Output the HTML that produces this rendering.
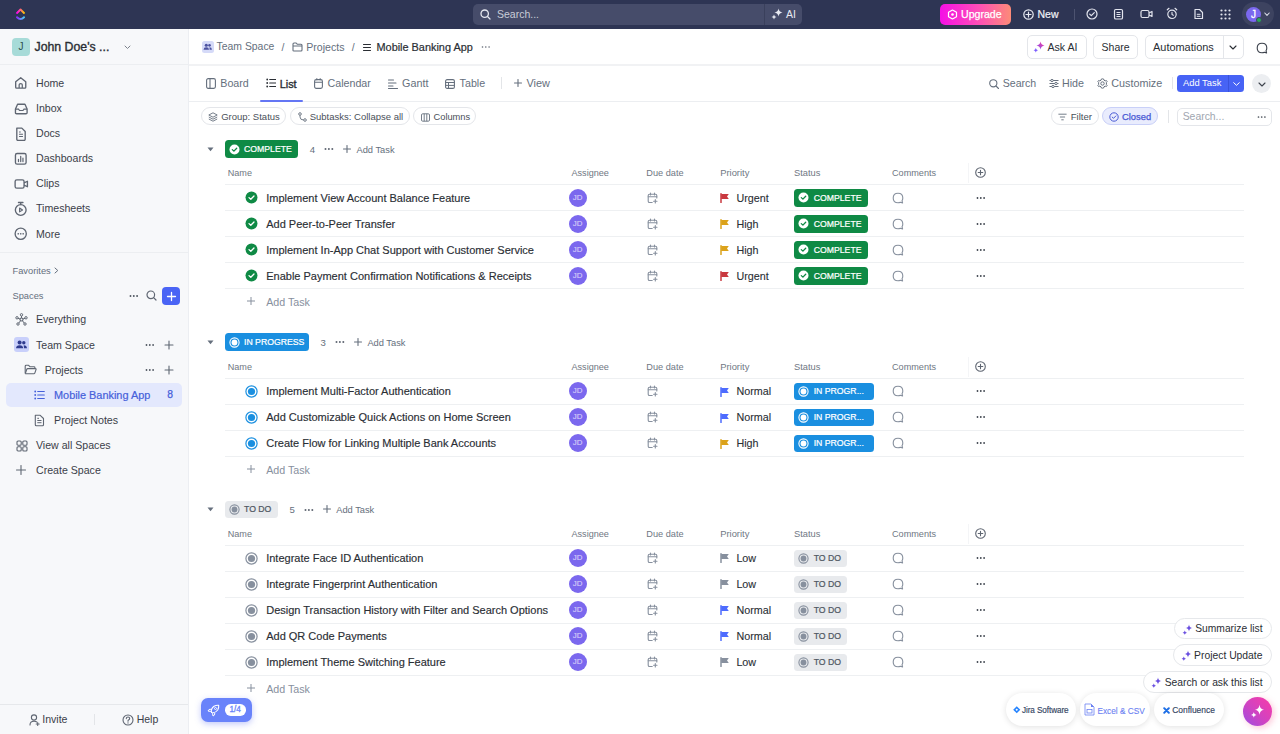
<!DOCTYPE html><html><head><meta charset="utf-8"><title>Mobile Banking App</title><style>
*{box-sizing:border-box;margin:0;padding:0}
html,body{width:1280px;height:734px;overflow:hidden;background:#fff;font-family:"Liberation Sans",sans-serif}
.t{position:absolute;white-space:nowrap}
</style></head><body>
<div style="position:absolute;left:0px;top:0px;width:1280px;height:29px;background:#2e3554"></div>
<svg style="position:absolute;left:15.00px;top:7.00px;" width="11.00" height="14.00" viewBox="0 0 11 14" fill="none"><defs><linearGradient id="lg1" x1="0" y1="0" x2="1" y2="0"><stop offset="0" stop-color="#ff02f0"/><stop offset="1" stop-color="#ffc800"/></linearGradient><linearGradient id="lg2" x1="0" y1="0" x2="1" y2="0"><stop offset="0" stop-color="#8930fd"/><stop offset="1" stop-color="#49ccf9"/></linearGradient></defs><path d="M2 5.9 L5.5 2.6 L9 5.9" stroke="url(#lg1)" stroke-width="2" stroke-linecap="round" stroke-linejoin="round"/><path d="M2 10.2 Q5.5 13.8 9 10.2" stroke="url(#lg2)" stroke-width="2" stroke-linecap="round"/></svg>
<div style="position:absolute;left:473px;top:4px;width:329px;height:21px;background:#464c6a;border-radius:5px"></div>
<div style="position:absolute;left:764px;top:4px;width:1px;height:21px;background:#3a405c"></div>
<svg style="position:absolute;left:480.00px;top:9.00px;" width="11.00" height="11.00" viewBox="0 0 11 11" fill="none"><circle cx="4.7" cy="4.7" r="3.7" stroke="#e6e8f0" stroke-width="1.3"/><path d="M7.5 7.5 L10 10" stroke="#e6e8f0" stroke-width="1.3" stroke-linecap="round"/></svg>
<div class="t" style="left:497px;top:4.0px;height:20px;line-height:20px;font-size:10.5px;color:#c9ccd8;font-weight:400;">Search...</div>
<svg style="position:absolute;left:771.00px;top:8.00px;" width="12.00" height="12.00" viewBox="0 0 12 12" fill="none"><path d="M7.5 0.5 Q8 4 11.5 4.5 Q8 5 7.5 8.5 Q7 5 3.5 4.5 Q7 4 7.5 0.5Z" fill="#e8eaf2"/><path d="M3 6.5 Q3.3 8.7 5.5 9 Q3.3 9.3 3 11.5 Q2.7 9.3 0.5 9 Q2.7 8.7 3 6.5Z" fill="#e8eaf2"/></svg>
<div class="t" style="left:786px;top:4.0px;height:20px;line-height:20px;font-size:10.5px;color:#e8eaf2;font-weight:400;">AI</div>
<div style="position:absolute;left:940px;top:4px;width:71px;height:21px;background:linear-gradient(90deg,#f50fe6 0%,#fd4fb6 55%,#fc8b78 100%);border-radius:5px"></div>
<svg style="position:absolute;left:947.00px;top:9.00px;" width="11.00" height="11.00" viewBox="0 0 11 11" fill="none"><path d="M5.5 1 L9.5 3.3 L9.5 7.7 L5.5 10 L1.5 7.7 L1.5 3.3Z" stroke="#fff" stroke-width="1.2" stroke-linejoin="round"/><circle cx="5.5" cy="5.5" r="1.3" fill="#fff"/></svg>
<div class="t" style="left:961px;top:3.9000000000000004px;height:20px;line-height:20px;font-size:10.6px;color:#fff;font-weight:400;-webkit-text-stroke:.25px #fff">Upgrade</div>
<svg style="position:absolute;left:1023.00px;top:9.00px;" width="11.00" height="11.00" viewBox="0 0 11 11" fill="none"><circle cx="5.5" cy="5.5" r="4.7" stroke="#e8eaf2" stroke-width="1.2"/><path d="M5.5 3 V8 M3 5.5 H8" stroke="#e8eaf2" stroke-width="1.2" stroke-linecap="round"/></svg>
<div class="t" style="left:1037.5px;top:3.9000000000000004px;height:20px;line-height:20px;font-size:10.5px;color:#f0f1f6;font-weight:400;-webkit-text-stroke:.2px #f0f1f6">New</div>
<div style="position:absolute;left:1074px;top:9px;width:1px;height:11px;background:#4d5370"></div>
<svg style="position:absolute;left:1086.00px;top:8.00px;" width="12.00" height="12.00" viewBox="0 0 12 12" fill="none"><circle cx="6" cy="6" r="5" stroke="#e3e5ee" stroke-width="1.2"/><path d="M3.7 6.1 L5.3 7.6 L8.3 4.6" stroke="#e3e5ee" stroke-width="1.2" stroke-linecap="round" stroke-linejoin="round"/></svg>
<svg style="position:absolute;left:1113.00px;top:8.00px;" width="11.00" height="12.00" viewBox="0 0 11 12" fill="none"><rect x="1.5" y="1.5" width="8" height="9.5" rx="1.3" stroke="#e3e5ee" stroke-width="1.2"/><path d="M3.5 4.5H7.5M3.5 6.5H7.5M3.5 8.5H7.5" stroke="#e3e5ee" stroke-width="1"/></svg>
<svg style="position:absolute;left:1140.00px;top:8.00px;" width="13.00" height="12.00" viewBox="0 0 13 12" fill="none"><rect x="1" y="2.5" width="8" height="7" rx="1.5" stroke="#e3e5ee" stroke-width="1.2"/><path d="M9 5 L12 3.5 V8.5 L9 7" stroke="#e3e5ee" stroke-width="1.2" stroke-linejoin="round"/></svg>
<svg style="position:absolute;left:1166.00px;top:7.00px;" width="12.00" height="13.00" viewBox="0 0 12 13" fill="none"><circle cx="6" cy="7.3" r="4.2" stroke="#e3e5ee" stroke-width="1.2"/><path d="M6 5.3 V7.5 L7.3 8.3" stroke="#e3e5ee" stroke-width="1.1" stroke-linecap="round"/><path d="M1.3 2.8 L3 1.3 M10.7 2.8 L9 1.3" stroke="#e3e5ee" stroke-width="1.2" stroke-linecap="round"/></svg>
<svg style="position:absolute;left:1193.00px;top:8.00px;" width="11.00" height="12.00" viewBox="0 0 11 12" fill="none"><path d="M2 1.5 H6.5 L9.5 4.5 V10.5 H2Z" stroke="#e3e5ee" stroke-width="1.2" stroke-linejoin="round"/><path d="M3.8 6.3H7.5M3.8 8.3H7.5" stroke="#e3e5ee" stroke-width="1"/></svg>
<svg style="position:absolute;left:1220.00px;top:9.00px;" width="11.00" height="11.00" viewBox="0 0 11 11" fill="none"><circle cx="1.5" cy="1.5" r="1.1" fill="#e3e5ee"/><circle cx="1.5" cy="5.5" r="1.1" fill="#e3e5ee"/><circle cx="1.5" cy="9.5" r="1.1" fill="#e3e5ee"/><circle cx="5.5" cy="1.5" r="1.1" fill="#e3e5ee"/><circle cx="5.5" cy="5.5" r="1.1" fill="#e3e5ee"/><circle cx="5.5" cy="9.5" r="1.1" fill="#e3e5ee"/><circle cx="9.5" cy="1.5" r="1.1" fill="#e3e5ee"/><circle cx="9.5" cy="5.5" r="1.1" fill="#e3e5ee"/><circle cx="9.5" cy="9.5" r="1.1" fill="#e3e5ee"/></svg>
<div style="position:absolute;left:1241.7px;top:2.3px;width:32px;height:23.5px;background:#3d4360;border-radius:12px"></div>
<div style="position:absolute;left:1246px;top:7px;width:15px;height:15px;background:#7b68ee;border-radius:50%"></div>
<div class="t" style="left:1246px;top:8.5px;height:12px;line-height:12px;font-size:10px;color:#fff;font-weight:400;width:15px;text-align:center;-webkit-text-stroke:.3px #fff">J</div>
<div style="position:absolute;left:1256px;top:17px;width:6px;height:6px;background:#2aa956;border-radius:50%;border:1px solid #3d4360"></div>
<svg style="position:absolute;left:1264.00px;top:12.00px;" width="6.00" height="5.00" viewBox="0 0 6 5" fill="none"><path d="M0.8 1 L3 3.4 L5.2 1" stroke="#d9dbe6" stroke-width="1.1" stroke-linecap="round" stroke-linejoin="round"/></svg>
<div style="position:absolute;left:0px;top:29px;width:189px;height:705px;background:#f7f8fa;border-right:1px solid #eceef2"></div>
<div style="position:absolute;left:0px;top:64px;width:188px;height:1px;background:#eceef1"></div>
<div style="position:absolute;left:12px;top:38px;width:18px;height:18px;background:#a7dbd8;border-radius:4px"></div>
<div class="t" style="left:12px;top:41.0px;height:12px;line-height:12px;font-size:10px;color:#2d4f4d;font-weight:400;width:18px;text-align:center">J</div>
<div class="t" style="left:34.5px;top:36.5px;height:20px;line-height:20px;font-size:12.3px;color:#2a2e34;font-weight:400;-webkit-text-stroke:.35px #2a2e34">John Doe's ...</div>
<svg style="position:absolute;left:124.00px;top:44.50px;" width="7.00" height="5.00" viewBox="0 0 7 5" fill="none"><path d="M1 1 L3.5 3.5 L6 1" stroke="#7c828c" stroke-width="1" stroke-linecap="round" stroke-linejoin="round"/></svg>
<svg style="position:absolute;left:14.48px;top:76.48px;" width="13.44" height="13.44" viewBox="0 0 12 12" fill="none"><path d="M1.5 5.2 L6 1.5 L10.5 5.2 V10 Q10.5 10.8 9.7 10.8 H2.3 Q1.5 10.8 1.5 10Z" stroke="#5f6672" stroke-width="1.2" stroke-linejoin="round"/><path d="M4.6 10.8 V7.8 Q4.6 6.8 6 6.8 Q7.4 6.8 7.4 7.8 V10.8" stroke="#5f6672" stroke-width="1.1"/></svg>
<div class="t" style="left:36px;top:73.2px;height:20px;line-height:20px;font-size:10.6px;color:#3b4049;font-weight:400;">Home</div>
<svg style="position:absolute;left:14.42px;top:101.53px;" width="14.56" height="13.44" viewBox="0 0 13 12" fill="none"><path d="M1.3 6.3 L3.2 2 H9.8 L11.7 6.3 V9.5 Q11.7 10.5 10.7 10.5 H2.3 Q1.3 10.5 1.3 9.5Z" stroke="#5f6672" stroke-width="1.2" stroke-linejoin="round"/><path d="M1.3 6.3 H4 L5 7.6 H8 L9 6.3 H11.7" stroke="#5f6672" stroke-width="1.1"/></svg>
<div class="t" style="left:36px;top:98.25px;height:20px;line-height:20px;font-size:10.6px;color:#3b4049;font-weight:400;">Inbox</div>
<svg style="position:absolute;left:14.48px;top:126.52px;" width="13.44" height="14.56" viewBox="0 0 12 13" fill="none"><path d="M2.5 1 H7 L10 4 V11 Q10 12 9 12 H3.5 Q2.5 12 2.5 11Z" stroke="#5f6672" stroke-width="1.2" stroke-linejoin="round"/><path d="M4.5 6.5H8M4.5 8.5H8M4.5 4.5H6" stroke="#5f6672" stroke-width="1"/></svg>
<div class="t" style="left:36px;top:123.30000000000001px;height:20px;line-height:20px;font-size:10.6px;color:#3b4049;font-weight:400;">Docs</div>
<svg style="position:absolute;left:14.48px;top:151.63px;" width="13.44" height="13.44" viewBox="0 0 12 12" fill="none"><rect x="1.3" y="1.3" width="9.5" height="9.5" rx="1.5" stroke="#5f6672" stroke-width="1.2"/><path d="M4 8.5V6.5M6 8.5V4M8 8.5V5.5" stroke="#5f6672" stroke-width="1.1" stroke-linecap="round"/></svg>
<div class="t" style="left:36px;top:148.35000000000002px;height:20px;line-height:20px;font-size:10.6px;color:#3b4049;font-weight:400;">Dashboards</div>
<svg style="position:absolute;left:14.42px;top:176.68px;" width="14.56" height="13.44" viewBox="0 0 13 12" fill="none"><rect x="1" y="2.5" width="8" height="7.5" rx="1.5" stroke="#5f6672" stroke-width="1.2"/><path d="M9 5.2 L12 3.8 V8.7 L9 7.3" stroke="#5f6672" stroke-width="1.2" stroke-linejoin="round"/></svg>
<div class="t" style="left:36px;top:173.4px;height:20px;line-height:20px;font-size:10.6px;color:#3b4049;font-weight:400;">Clips</div>
<svg style="position:absolute;left:14.48px;top:200.61px;" width="13.44" height="15.68" viewBox="0 0 12 14" fill="none"><circle cx="6" cy="8" r="4.8" stroke="#5f6672" stroke-width="1.2"/><path d="M4 1.3H8M6 1.3V3.2" stroke="#5f6672" stroke-width="1.2" stroke-linecap="round"/><path d="M5 6.3 L7.6 8 L5 9.7Z" stroke="#5f6672" stroke-width="1" stroke-linejoin="round"/></svg>
<div class="t" style="left:36px;top:198.45px;height:20px;line-height:20px;font-size:10.6px;color:#3b4049;font-weight:400;">Timesheets</div>
<svg style="position:absolute;left:14.48px;top:226.78px;" width="13.44" height="13.44" viewBox="0 0 12 12" fill="none"><circle cx="6" cy="6" r="5" stroke="#5f6672" stroke-width="1.2"/><circle cx="3.8" cy="6" r=".75" fill="#5f6672"/><circle cx="6" cy="6" r=".75" fill="#5f6672"/><circle cx="8.2" cy="6" r=".75" fill="#5f6672"/></svg>
<div class="t" style="left:36px;top:223.5px;height:20px;line-height:20px;font-size:10.6px;color:#3b4049;font-weight:400;">More</div>
<div style="position:absolute;left:0px;top:252px;width:188px;height:1px;background:#eceef1"></div>
<div class="t" style="left:12.5px;top:260.5px;height:20px;line-height:20px;font-size:9.3px;color:#656f7d;font-weight:400;">Favorites</div>
<svg style="position:absolute;left:54.00px;top:267.00px;" width="5.00" height="7.00" viewBox="0 0 5 7" fill="none"><path d="M1 1 L3.8 3.5 L1 6" stroke="#656f7d" stroke-width="1" stroke-linecap="round" stroke-linejoin="round"/></svg>
<div class="t" style="left:12.5px;top:285.5px;height:20px;line-height:20px;font-size:9.3px;color:#656f7d;font-weight:400;">Spaces</div>
<svg style="position:absolute;left:128.50px;top:293.50px;" width="10.00" height="4.00" viewBox="0 0 10 4" fill="none"><circle cx="1.5" cy="2" r="0.95" fill="#4f5660"/><circle cx="4.8" cy="2" r="0.95" fill="#4f5660"/><circle cx="8.1" cy="2" r="0.95" fill="#4f5660"/></svg>
<svg style="position:absolute;left:146.00px;top:290.00px;" width="11.00" height="11.00" viewBox="0 0 11 11" fill="none"><circle cx="4.8" cy="4.8" r="3.8" stroke="#5f6672" stroke-width="1.2"/><path d="M7.6 7.6 L10 10" stroke="#5f6672" stroke-width="1.2" stroke-linecap="round"/></svg>
<div style="position:absolute;left:162px;top:287px;width:17.5px;height:17.5px;background:#4a64f5;border-radius:4px"></div>
<svg style="position:absolute;left:165.50px;top:290.50px;" width="11.00" height="11.00" viewBox="0 0 11 11" fill="none"><path d="M5.5 1.5V9.5M1.5 5.5H9.5" stroke="#fff" stroke-width="1.3" stroke-linecap="round"/></svg>
<svg style="position:absolute;left:15.00px;top:312.80px;" width="13.00" height="13.00" viewBox="0 0 13 13" fill="none"><circle cx="6.5" cy="6.5" r="1.5" stroke="#5f6672" stroke-width="1.1"/><circle cx="6.5" cy="1.8" r="1.2" stroke="#5f6672" stroke-width="1"/><circle cx="2" cy="4.8" r="1.2" stroke="#5f6672" stroke-width="1"/><circle cx="11" cy="4.8" r="1.2" stroke="#5f6672" stroke-width="1"/><circle cx="3" cy="11" r="1.2" stroke="#5f6672" stroke-width="1"/><circle cx="10" cy="11" r="1.2" stroke="#5f6672" stroke-width="1"/><path d="M6.5 3V5M3 5.3L5 6M10 5.3L8 6M3.8 10L5.5 7.8M9.2 10L7.5 7.8" stroke="#5f6672" stroke-width="1"/></svg>
<div class="t" style="left:36px;top:309.0px;height:20px;line-height:20px;font-size:10.6px;color:#3b4049;font-weight:400;">Everything</div>
<div style="position:absolute;left:13.5px;top:337.3px;width:15px;height:15px;background:#c9d0fb;border-radius:3px"></div>
<svg style="position:absolute;left:13.50px;top:337.30px;" width="15.00" height="15.00" viewBox="0 0 15 15" fill="none"><circle cx="5.6" cy="5.5" r="2.0" fill="#2f3b8f"/><circle cx="9.8" cy="5.7" r="1.7" fill="#2f3b8f"/><path d="M2.0 11.3 Q2.2 8.3 5.6 8.3 Q9.0 8.3 9.2 11.3Z" fill="#2f3b8f"/><path d="M9.7 8.3 Q12.8 8.3 13.0 11.3 H10.0Z" fill="#2f3b8f"/></svg>
<div class="t" style="left:36px;top:334.5px;height:20px;line-height:20px;font-size:10.6px;color:#3b4049;font-weight:400;">Team Space</div>
<svg style="position:absolute;left:144.50px;top:342.50px;" width="10.00" height="4.00" viewBox="0 0 10 4" fill="none"><circle cx="1.5" cy="2" r="0.9" fill="#4f5660"/><circle cx="4.8" cy="2" r="0.9" fill="#4f5660"/><circle cx="8.1" cy="2" r="0.9" fill="#4f5660"/></svg>
<svg style="position:absolute;left:164.00px;top:339.50px;" width="10.00" height="10.00" viewBox="0 0 10 10" fill="none"><path d="M5 1V9M1 5H9" stroke="#5f6672" stroke-width="1.1" stroke-linecap="round"/></svg>
<svg style="position:absolute;left:24.00px;top:364.00px;" width="13.00" height="11.00" viewBox="0 0 13 11" fill="none"><path d="M1.2 9.3 V2.2 Q1.2 1.3 2.1 1.3 H4.6 L5.9 2.7 H10 Q10.9 2.7 10.9 3.6 V4.6" stroke="#5f6672" stroke-width="1.1" stroke-linejoin="round"/><path d="M1.2 9.7 L2.8 5.2 Q3 4.6 3.7 4.6 H11.5 Q12.3 4.6 12.1 5.3 L10.8 9.2 Q10.6 9.8 9.9 9.8 H1.2" stroke="#5f6672" stroke-width="1.1" stroke-linejoin="round"/></svg>
<div class="t" style="left:44.8px;top:359.8px;height:20px;line-height:20px;font-size:10.6px;color:#3b4049;font-weight:400;">Projects</div>
<svg style="position:absolute;left:144.50px;top:367.80px;" width="10.00" height="4.00" viewBox="0 0 10 4" fill="none"><circle cx="1.5" cy="2" r="0.9" fill="#4f5660"/><circle cx="4.8" cy="2" r="0.9" fill="#4f5660"/><circle cx="8.1" cy="2" r="0.9" fill="#4f5660"/></svg>
<svg style="position:absolute;left:164.00px;top:365.00px;" width="10.00" height="10.00" viewBox="0 0 10 10" fill="none"><path d="M5 1V9M1 5H9" stroke="#5f6672" stroke-width="1.1" stroke-linecap="round"/></svg>
<div style="position:absolute;left:6.3px;top:383px;width:176.2px;height:23.5px;background:#e3e8fd;border-radius:5px"></div>
<svg style="position:absolute;left:33.50px;top:389.70px;" width="11.00" height="10.00" viewBox="0 0 11 10" fill="none"><circle cx="1.2" cy="1.5" r=".9" fill="#4560da"/><circle cx="1.2" cy="5" r=".9" fill="#4560da"/><circle cx="1.2" cy="8.5" r=".9" fill="#4560da"/><path d="M3.7 1.5H10.3M3.7 5H10.3M3.7 8.5H10.3" stroke="#4560da" stroke-width="1.1" stroke-linecap="round"/></svg>
<div class="t" style="left:54px;top:384.7px;height:20px;line-height:20px;font-size:10.9px;color:#4560da;font-weight:400;-webkit-text-stroke:.2px #4560da">Mobile Banking App</div>
<div class="t" style="left:167.3px;top:384.9px;height:20px;line-height:20px;font-size:10.3px;color:#4560da;font-weight:400;-webkit-text-stroke:.25px #4560da">8</div>
<svg style="position:absolute;left:33.50px;top:414.00px;" width="11.00" height="13.00" viewBox="0 0 11 13" fill="none"><path d="M1.3 1.3 H6.2 L9.5 4.5 V10.8 Q9.5 11.8 8.5 11.8 H2.3 Q1.3 11.8 1.3 10.8Z" stroke="#5f6672" stroke-width="1.1" stroke-linejoin="round"/><path d="M3.3 6.5H7.5M3.3 8.7H7.5M3.3 4.3H5" stroke="#5f6672" stroke-width="1"/></svg>
<div class="t" style="left:54px;top:410.3px;height:20px;line-height:20px;font-size:10.7px;color:#3b4049;font-weight:400;">Project Notes</div>
<svg style="position:absolute;left:15.50px;top:439.50px;" width="12.00" height="12.00" viewBox="0 0 12 12" fill="none"><rect x="1" y="1" width="4.2" height="4.2" rx="1" stroke="#5f6672" stroke-width="1.1"/><rect x="6.8" y="1" width="4.2" height="4.2" rx="1" stroke="#5f6672" stroke-width="1.1"/><rect x="1" y="6.8" width="4.2" height="4.2" rx="1" stroke="#5f6672" stroke-width="1.1"/><rect x="6.8" y="6.8" width="4.2" height="4.2" rx="1" stroke="#5f6672" stroke-width="1.1"/></svg>
<div class="t" style="left:36px;top:435.3px;height:20px;line-height:20px;font-size:10.6px;color:#3b4049;font-weight:400;">View all Spaces</div>
<svg style="position:absolute;left:16.00px;top:465.30px;" width="10.00" height="10.00" viewBox="0 0 10 10" fill="none"><path d="M5 .5V9.5M.5 5H9.5" stroke="#5f6672" stroke-width="1.1" stroke-linecap="round"/></svg>
<div class="t" style="left:36px;top:460.4px;height:20px;line-height:20px;font-size:10.6px;color:#3b4049;font-weight:400;">Create Space</div>
<div style="position:absolute;left:0px;top:704px;width:188px;height:1px;background:#e6e8eb"></div>
<svg style="position:absolute;left:28.50px;top:713.50px;" width="11.00" height="12.00" viewBox="0 0 11 12" fill="none"><circle cx="5" cy="3.5" r="2.6" stroke="#5f6672" stroke-width="1.1"/><path d="M1 11 Q1 7.2 5 7.2 Q6.8 7.2 7.8 8" stroke="#5f6672" stroke-width="1.1" stroke-linecap="round"/><path d="M8.7 8.5V11.5M7.2 10H10.2" stroke="#5f6672" stroke-width="1.1" stroke-linecap="round"/></svg>
<div class="t" style="left:42.2px;top:709.0px;height:20px;line-height:20px;font-size:10.6px;color:#3b4049;font-weight:400;">Invite</div>
<div style="position:absolute;left:94px;top:713.5px;width:1px;height:11px;background:#e3e5e8"></div>
<svg style="position:absolute;left:122.00px;top:714.00px;" width="12.00" height="12.00" viewBox="0 0 12 12" fill="none"><circle cx="6" cy="6" r="5" stroke="#5f6672" stroke-width="1.1"/><path d="M4.3 4.6 Q4.3 3 6 3 Q7.7 3 7.7 4.5 Q7.7 5.5 6.5 6 Q6 6.2 6 7.2" stroke="#5f6672" stroke-width="1.1" stroke-linecap="round"/><circle cx="6" cy="8.9" r=".7" fill="#5f6672"/></svg>
<div class="t" style="left:136.7px;top:709.0px;height:20px;line-height:20px;font-size:10.5px;color:#3b4049;font-weight:400;">Help</div>
<div style="position:absolute;left:189px;top:64px;width:1091px;height:2px;background:#f1f2f4"></div>
<div style="position:absolute;left:202px;top:41.3px;width:11.5px;height:11.5px;background:#d5daf8;border-radius:2.5px"></div>
<svg style="position:absolute;left:202.00px;top:41.30px;" width="11.50" height="11.50" viewBox="0 0 11.5 11.5" fill="none"><circle cx="4.293333333333333" cy="4.216666666666667" r="1.5333333333333334" fill="#4b51a0"/><circle cx="7.5133333333333345" cy="4.37" r="1.3033333333333335" fill="#4b51a0"/><path d="M1.5333333333333334 8.663333333333334 Q1.686666666666667 6.363333333333334 4.293333333333333 6.363333333333334 Q6.9 6.363333333333334 7.053333333333334 8.663333333333334Z" fill="#4b51a0"/><path d="M7.4366666666666665 6.363333333333334 Q9.813333333333334 6.363333333333334 9.966666666666667 8.663333333333334 H7.666666666666667Z" fill="#4b51a0"/></svg>
<div class="t" style="left:216.6px;top:37.0px;height:20px;line-height:20px;font-size:10.4px;color:#656f7d;font-weight:400;">Team Space</div>
<div class="t" style="left:281.5px;top:37.0px;height:20px;line-height:20px;font-size:10.5px;color:#656f7d;font-weight:400;">/</div>
<svg style="position:absolute;left:291.50px;top:42.00px;" width="11.00" height="10.00" viewBox="0 0 11 10" fill="none"><path d="M1 8.5V2Q1 1 2 1H4.2L5.4 2.3H9Q10 2.3 10 3.3V8Q10 9 9 9H2Q1 9 1 8.5Z" stroke="#656f7d" stroke-width="1.1" stroke-linejoin="round"/><path d="M1 4H10" stroke="#656f7d" stroke-width="1"/></svg>
<div class="t" style="left:306.2px;top:37.0px;height:20px;line-height:20px;font-size:10.6px;color:#656f7d;font-weight:400;">Projects</div>
<div class="t" style="left:351.8px;top:37.0px;height:20px;line-height:20px;font-size:10.5px;color:#656f7d;font-weight:400;">/</div>
<svg style="position:absolute;left:363.00px;top:42.50px;" width="8.00" height="9.00" viewBox="0 0 8 9" fill="none"><path d="M.5 1.5H7.5M.5 4.5H7.5M.5 7.5H7.5" stroke="#2a2e34" stroke-width="1.1" stroke-linecap="round"/></svg>
<div class="t" style="left:376.5px;top:37.0px;height:20px;line-height:20px;font-size:10.9px;color:#2a2e34;font-weight:400;-webkit-text-stroke:.2px #2a2e34">Mobile Banking App</div>
<svg style="position:absolute;left:480.50px;top:45.00px;" width="10.00" height="4.00" viewBox="0 0 10 4" fill="none"><circle cx="1.5" cy="2" r="0.8" fill="#5f6672"/><circle cx="4.8" cy="2" r="0.8" fill="#5f6672"/><circle cx="8.1" cy="2" r="0.8" fill="#5f6672"/></svg>
<div style="position:absolute;left:1026.5px;top:35.2px;width:60px;height:23.4px;border:1px solid #e4e6ea;border-radius:5px;background:#fff"></div>
<svg style="position:absolute;left:1032.50px;top:41.00px;" width="12.00" height="12.00" viewBox="0 0 12 12" fill="none"><defs><linearGradient id="sp" x1="0" y1="1" x2="1" y2="0"><stop offset="0" stop-color="#7b4dff"/><stop offset="1" stop-color="#ff3d8f"/></linearGradient></defs><path d="M7.5 0.5 Q8 4 11.5 4.5 Q8 5 7.5 8.5 Q7 5 3.5 4.5 Q7 4 7.5 0.5Z" fill="url(#sp)"/><path d="M2.8 7 Q3.1 8.9 5 9.2 Q3.1 9.5 2.8 11.5 Q2.5 9.5 .6 9.2 Q2.5 8.9 2.8 7Z" fill="#7b5cff"/></svg>
<div class="t" style="left:1047.5px;top:37.0px;height:20px;line-height:20px;font-size:10.6px;color:#2a2e34;font-weight:400;">Ask AI</div>
<div style="position:absolute;left:1093.2px;top:35.2px;width:45.2px;height:23.4px;border:1px solid #e4e6ea;border-radius:5px;background:#fff"></div>
<div class="t" style="left:1101.6px;top:37.0px;height:20px;line-height:20px;font-size:10.5px;color:#2a2e34;font-weight:400;">Share</div>
<div style="position:absolute;left:1144.8px;top:35.2px;width:99px;height:23.4px;border:1px solid #e4e6ea;border-radius:5px;background:#fff"></div>
<div style="position:absolute;left:1222.5px;top:35.2px;width:1px;height:23.4px;background:#e4e6ea"></div>
<div class="t" style="left:1153px;top:37.0px;height:20px;line-height:20px;font-size:10.95px;color:#2a2e34;font-weight:400;">Automations</div>
<svg style="position:absolute;left:1229.00px;top:44.50px;" width="8.00" height="5.00" viewBox="0 0 8 5" fill="none"><path d="M1 1 L4 4 L7 1" stroke="#2a2e34" stroke-width="1.1" stroke-linecap="round" stroke-linejoin="round"/></svg>
<svg style="position:absolute;left:1256.00px;top:41.50px;" width="12.00" height="12.00" viewBox="0 0 12 12" fill="none"><path d="M6 1.2 Q10.8 1.2 10.8 6 Q10.8 7.6 10 8.7 L10.6 10.9 L8.4 10.3 Q7.3 10.8 6 10.8 Q1.2 10.8 1.2 6 Q1.2 1.2 6 1.2Z" stroke="#3d434d" stroke-width="1.1" stroke-linejoin="round"/></svg>
<div style="position:absolute;left:189px;top:101px;width:1091px;height:1px;background:#eceef1"></div>
<svg style="position:absolute;left:206.00px;top:78.00px;" width="10.00" height="11.00" viewBox="0 0 10 11" fill="none"><rect x=".6" y=".6" width="8.8" height="9.8" rx="1.6" stroke="#656f7d" stroke-width="1.1"/><path d="M4 .6V10.4" stroke="#656f7d" stroke-width="1.1"/></svg>
<div class="t" style="left:220.3px;top:73.3px;height:20px;line-height:20px;font-size:10.7px;color:#656f7d;font-weight:400;">Board</div>
<svg style="position:absolute;left:265.70px;top:78.30px;" width="10.00" height="10.00" viewBox="0 0 10 10" fill="none"><circle cx="1.2" cy="1.5" r=".9" fill="#2a2e34"/><circle cx="1.2" cy="5" r=".9" fill="#2a2e34"/><circle cx="1.2" cy="8.5" r=".9" fill="#2a2e34"/><path d="M3.7 1.5H10.3M3.7 5H10.3M3.7 8.5H10.3" stroke="#2a2e34" stroke-width="1.1" stroke-linecap="round"/></svg>
<div class="t" style="left:279.7px;top:73.5px;height:20px;line-height:20px;font-size:10.9px;color:#2a2e34;font-weight:400;-webkit-text-stroke:.35px #2a2e34">List</div>
<div style="position:absolute;left:260px;top:99.5px;width:42.5px;height:2px;background:#6476f4;border-radius:1px"></div>
<svg style="position:absolute;left:314.00px;top:78.00px;" width="9.00" height="11.00" viewBox="0 0 9 11" fill="none"><rect x=".6" y="1.6" width="7.8" height="8.8" rx="1.6" stroke="#656f7d" stroke-width="1.1"/><path d="M.6 4.3H8.4M2.8 .3V2.3M6.2 .3V2.3" stroke="#656f7d" stroke-width="1.1"/></svg>
<div class="t" style="left:327.5px;top:73.3px;height:20px;line-height:20px;font-size:10.7px;color:#656f7d;font-weight:400;">Calendar</div>
<svg style="position:absolute;left:388.00px;top:78.50px;" width="10.00" height="10.00" viewBox="0 0 10 10" fill="none"><path d="M.5 1H5.5M.5 4H8M.5 7H5M.5 9.5H9.5" stroke="#656f7d" stroke-width="1.1" stroke-linecap="round"/></svg>
<div class="t" style="left:402px;top:73.3px;height:20px;line-height:20px;font-size:10.8px;color:#656f7d;font-weight:400;">Gantt</div>
<svg style="position:absolute;left:445.00px;top:78.50px;" width="10.00" height="10.00" viewBox="0 0 10 10" fill="none"><rect x=".6" y=".6" width="8.8" height="8.8" rx="1.5" stroke="#656f7d" stroke-width="1.1"/><path d="M.6 3.5H9.4M.6 6.4H9.4M3.5 3.5V9.4" stroke="#656f7d" stroke-width="1"/></svg>
<div class="t" style="left:459.6px;top:73.3px;height:20px;line-height:20px;font-size:10.7px;color:#656f7d;font-weight:400;">Table</div>
<div style="position:absolute;left:500.5px;top:77px;width:1px;height:12px;background:#e3e5e8"></div>
<svg style="position:absolute;left:513.50px;top:79.00px;" width="8.00" height="8.00" viewBox="0 0 8 8" fill="none"><path d="M4 .5V7.5M.5 4H7.5" stroke="#656f7d" stroke-width="1.1" stroke-linecap="round"/></svg>
<div class="t" style="left:526.4px;top:73.3px;height:20px;line-height:20px;font-size:10.9px;color:#656f7d;font-weight:400;">View</div>
<svg style="position:absolute;left:988.50px;top:78.50px;" width="10.00" height="10.00" viewBox="0 0 10 10" fill="none"><circle cx="4.3" cy="4.3" r="3.6" stroke="#656f7d" stroke-width="1.1"/><path d="M7 7L9.5 9.5" stroke="#656f7d" stroke-width="1.1" stroke-linecap="round"/></svg>
<div class="t" style="left:1002.7px;top:73.3px;height:20px;line-height:20px;font-size:10.6px;color:#656f7d;font-weight:400;">Search</div>
<svg style="position:absolute;left:1048.50px;top:79.00px;" width="10.00" height="9.00" viewBox="0 0 10 9" fill="none"><path d="M.5 1.5H9.5M.5 4.5H9.5M.5 7.5H9.5" stroke="#656f7d" stroke-width="1"/><circle cx="3" cy="1.5" r="1.2" fill="#fff" stroke="#656f7d" stroke-width="1"/><circle cx="7" cy="4.5" r="1.2" fill="#fff" stroke="#656f7d" stroke-width="1"/><circle cx="4" cy="7.5" r="1.2" fill="#fff" stroke="#656f7d" stroke-width="1"/></svg>
<div class="t" style="left:1062px;top:73.3px;height:20px;line-height:20px;font-size:10.7px;color:#656f7d;font-weight:400;">Hide</div>
<svg style="position:absolute;left:1096.50px;top:78.00px;" width="11.00" height="11.00" viewBox="0 0 11 11" fill="none"><path d="M5.5 .8 L6.6 1 L7 2.2 L8.2 2.9 L9.4 2.5 L10.1 3.5 L9.4 4.5 V6.5 L10.1 7.5 L9.4 8.5 L8.2 8.1 L7 8.8 L6.6 10 L5.5 10.2 L4.4 10 L4 8.8 L2.8 8.1 L1.6 8.5 L.9 7.5 L1.6 6.5 V4.5 L.9 3.5 L1.6 2.5 L2.8 2.9 L4 2.2 L4.4 1Z" stroke="#656f7d" stroke-width="1" stroke-linejoin="round"/><circle cx="5.5" cy="5.5" r="1.7" stroke="#656f7d" stroke-width="1"/></svg>
<div class="t" style="left:1111.2px;top:73.3px;height:20px;line-height:20px;font-size:10.8px;color:#656f7d;font-weight:400;">Customize</div>
<div style="position:absolute;left:1171.5px;top:77px;width:1px;height:12px;background:#e3e5e8"></div>
<div style="position:absolute;left:1177px;top:74.5px;width:67px;height:17.6px;background:#4763f5;border-radius:3.5px"></div>
<div style="position:absolute;left:1228.3px;top:74.5px;width:1px;height:17.6px;background:#3a53dc"></div>
<div class="t" style="left:1183px;top:73.3px;height:20px;line-height:20px;font-size:9.4px;color:#fff;font-weight:400;">Add Task</div>
<svg style="position:absolute;left:1232.50px;top:81.50px;" width="7.00" height="4.00" viewBox="0 0 7 4" fill="none"><path d="M.7 .7 L3.5 3.3 L6.3 .7" stroke="#fff" stroke-width="1" stroke-linecap="round" stroke-linejoin="round"/></svg>
<div style="position:absolute;left:1252.3px;top:74px;width:19px;height:19px;background:#eceef1;border-radius:50%"></div>
<svg style="position:absolute;left:1258.00px;top:81.50px;" width="8.00" height="5.00" viewBox="0 0 8 5" fill="none"><path d="M1 1 L4 4 L7 1" stroke="#3d434d" stroke-width="1.1" stroke-linecap="round" stroke-linejoin="round"/></svg>
<div style="position:absolute;left:201.3px;top:107.2px;width:85.2px;height:18px;border:1px solid #e4e6ea;background:#fff;border-radius:9px"></div>
<svg style="position:absolute;left:208.00px;top:112.00px;" width="10.00" height="10.00" viewBox="0 0 10 10" fill="none"><path d="M5 .8 L9.2 3 L5 5.2 L.8 3Z" stroke="#656f7d" stroke-width=".9" stroke-linejoin="round"/><path d="M.8 5 L5 7.2 L9.2 5M.8 7 L5 9.2 L9.2 7" stroke="#656f7d" stroke-width=".9" stroke-linejoin="round"/></svg>
<div class="t" style="left:221.2px;top:106.7px;height:20px;line-height:20px;font-size:9.5px;color:#4a5059;font-weight:400;">Group: Status</div>
<div style="position:absolute;left:290px;top:107.2px;width:119.7px;height:18px;border:1px solid #e4e6ea;background:#fff;border-radius:9px"></div>
<svg style="position:absolute;left:297.50px;top:112.00px;" width="9.00" height="10.00" viewBox="0 0 9 10" fill="none"><circle cx="2" cy="2" r="1.3" stroke="#656f7d" stroke-width=".9"/><circle cx="7" cy="8" r="1.3" stroke="#656f7d" stroke-width=".9"/><path d="M2 3.3 V5 Q2 8 5.7 8" stroke="#656f7d" stroke-width=".9"/></svg>
<div class="t" style="left:309.7px;top:106.7px;height:20px;line-height:20px;font-size:9.5px;color:#4a5059;font-weight:400;">Subtasks: Collapse all</div>
<div style="position:absolute;left:413.3px;top:107.2px;width:63.2px;height:18px;border:1px solid #e4e6ea;background:#fff;border-radius:9px"></div>
<svg style="position:absolute;left:420.50px;top:112.50px;" width="9.00" height="9.00" viewBox="0 0 9 9" fill="none"><rect x=".5" y=".8" width="8" height="7.4" rx="1.2" stroke="#656f7d" stroke-width=".9"/><path d="M3.2 .8V8.2M5.8 .8V8.2" stroke="#656f7d" stroke-width=".9"/></svg>
<div class="t" style="left:433.5px;top:106.7px;height:20px;line-height:20px;font-size:9.3px;color:#4a5059;font-weight:400;">Columns</div>
<div style="position:absolute;left:1050.8px;top:107.2px;width:47.8px;height:18px;border:1px solid #e4e6ea;background:#fff;border-radius:9px"></div>
<svg style="position:absolute;left:1058.00px;top:113.00px;" width="9.00" height="8.00" viewBox="0 0 9 8" fill="none"><path d="M.8 1.2H8.2M2.3 4H6.7M3.7 6.8H5.3" stroke="#656f7d" stroke-width=".9" stroke-linecap="round"/></svg>
<div class="t" style="left:1070.7px;top:106.7px;height:20px;line-height:20px;font-size:9.6px;color:#4a5059;font-weight:400;">Filter</div>
<div style="position:absolute;left:1102px;top:107.2px;width:56px;height:18px;border:1px solid #c9d0f8;background:#e9ecfd;border-radius:9px"></div>
<svg style="position:absolute;left:1108.80px;top:112.30px;" width="10.00" height="10.00" viewBox="0 0 10 10" fill="none"><circle cx="5" cy="5" r="4.2" stroke="#4a5bd4" stroke-width="1"/><path d="M3.2 5.1 L4.5 6.3 L6.9 3.9" stroke="#4a5bd4" stroke-width="1" stroke-linecap="round" stroke-linejoin="round"/></svg>
<div class="t" style="left:1122px;top:106.7px;height:20px;line-height:20px;font-size:9.4px;color:#4858d4;font-weight:400;-webkit-text-stroke:.25px #4858d4">Closed</div>
<div style="position:absolute;left:1167.5px;top:110px;width:1px;height:13px;background:#e3e5e8"></div>
<div style="position:absolute;left:1177px;top:107.6px;width:95px;height:18px;border:1px solid #e4e6ea;border-radius:5px;background:#fff"></div>
<div class="t" style="left:1182.7px;top:107.3px;height:20px;line-height:20px;font-size:10.4px;color:#a0a6b0;font-weight:400;">Search...</div>
<svg style="position:absolute;left:1256.50px;top:114.70px;" width="10.00" height="4.00" viewBox="0 0 10 4" fill="none"><circle cx="1.5" cy="2" r="0.85" fill="#4a5059"/><circle cx="4.7" cy="2" r="0.85" fill="#4a5059"/><circle cx="7.9" cy="2" r="0.85" fill="#4a5059"/></svg>
<svg style="position:absolute;left:207.00px;top:147.00px;" width="7.00" height="5.00" viewBox="0 0 7 5" fill="none"><path d="M.5 .5 H6.5 L3.5 4.3Z" fill="#656f7d"/></svg>
<div style="position:absolute;left:224.7px;top:140.3px;width:73.4px;height:17.4px;background:#0f8a45;border-radius:3.5px"></div>
<svg style="position:absolute;left:228.70px;top:143.50px;" width="11.00" height="11.00" viewBox="0 0 11 11" fill="none"><circle cx="5.5" cy="5.5" r="5" fill="#fff"/><path d="M3.3 5.6 L4.9 7.1 L7.7 4.2" stroke="#0f8a45" stroke-width="1.3" stroke-linecap="round" stroke-linejoin="round"/></svg>
<div class="t" style="left:244px;top:143.0px;height:12px;line-height:12px;font-size:8.7px;color:#fff;font-weight:400;-webkit-text-stroke:.22px #fff">COMPLETE</div>
<div class="t" style="left:309.70000000000005px;top:139.6px;height:20px;line-height:20px;font-size:9.6px;color:#656f7d;font-weight:400;">4</div>
<svg style="position:absolute;left:324.20px;top:147.30px;" width="10.00" height="4.00" viewBox="0 0 10 4" fill="none"><circle cx="1.5" cy="2" r="1" fill="#5f6672"/><circle cx="4.9" cy="2" r="1" fill="#5f6672"/><circle cx="8.3" cy="2" r="1" fill="#5f6672"/></svg>
<svg style="position:absolute;left:343.20px;top:145.00px;" width="8.00" height="8.00" viewBox="0 0 8 8" fill="none"><path d="M4 .5V7.5M.5 4H7.5" stroke="#656f7d" stroke-width="1.1" stroke-linecap="round"/></svg>
<div class="t" style="left:356.50000000000006px;top:139.5px;height:20px;line-height:20px;font-size:9.3px;color:#656f7d;font-weight:400;">Add Task</div>
<div class="t" style="left:227.7px;top:162.6px;height:20px;line-height:20px;font-size:9.1px;color:#6f7783;font-weight:400;">Name</div>
<div class="t" style="left:571.5px;top:162.6px;height:20px;line-height:20px;font-size:9.1px;color:#6f7783;font-weight:400;">Assignee</div>
<div class="t" style="left:646.3px;top:162.6px;height:20px;line-height:20px;font-size:9.2px;color:#6f7783;font-weight:400;">Due date</div>
<div class="t" style="left:720.2px;top:162.6px;height:20px;line-height:20px;font-size:9.4px;color:#6f7783;font-weight:400;">Priority</div>
<div class="t" style="left:794px;top:162.6px;height:20px;line-height:20px;font-size:9.3px;color:#6f7783;font-weight:400;">Status</div>
<div class="t" style="left:892px;top:162.6px;height:20px;line-height:20px;font-size:9.15px;color:#6f7783;font-weight:400;">Comments</div>
<svg style="position:absolute;left:975.00px;top:167.10px;" width="11.00" height="11.00" viewBox="0 0 11 11" fill="none"><circle cx="5.5" cy="5.5" r="4.8" stroke="#5f6672" stroke-width="1.1"/><path d="M5.5 3.2V7.8M3.2 5.5H7.8" stroke="#5f6672" stroke-width="1.1" stroke-linecap="round"/></svg>
<div style="position:absolute;left:225px;top:184px;width:1019px;height:1px;background:#eef0f2"></div>
<div style="position:absolute;left:968px;top:162.6px;width:1px;height:20px;background:#f4f5f7"></div>
<svg style="position:absolute;left:244.70px;top:191.40px;" width="13.00" height="13.00" viewBox="0 0 13 13" fill="none"><circle cx="6.5" cy="6.5" r="6" fill="#0f8a45"/><path d="M4 6.6 L5.8 8.3 L9 5" stroke="#fff" stroke-width="1.3" stroke-linecap="round" stroke-linejoin="round"/></svg>
<div class="t" style="left:266.2px;top:187.9px;height:20px;line-height:20px;font-size:11px;color:#2a2e34;font-weight:400;-webkit-text-stroke:.15px #2a2e34">Implement View Account Balance Feature</div>
<div style="position:absolute;left:568.6px;top:188.9px;width:18px;height:18px;background:#7b68ee;border-radius:50%"></div>
<div class="t" style="left:568.6px;top:192.9px;height:10px;line-height:10px;font-size:7.9px;color:#d3cbf9;font-weight:400;width:18px;text-align:center;-webkit-text-stroke:.15px #d3cbf9">JD</div>
<svg style="position:absolute;left:646.50px;top:191.90px;" width="11.00" height="12.00" viewBox="0 0 11 12" fill="none"><path d="M5.2 10.5 H2.5 Q1.2 10.5 1.2 9.2 V3.5 Q1.2 2.2 2.5 2.2 H8.5 Q9.8 2.2 9.8 3.5 V6" stroke="#87909e" stroke-width="1.1" stroke-linecap="round"/><path d="M1.2 4.8H9.8M3.5 1V3M7.5 1V3" stroke="#87909e" stroke-width="1.1" stroke-linecap="round"/><path d="M8.3 7.5V11M6.6 9.3H10" stroke="#87909e" stroke-width="1.1" stroke-linecap="round"/></svg>
<svg style="position:absolute;left:719.70px;top:193.10px;" width="10.00" height="10.00" viewBox="0 0 10 10" fill="none"><path d="M1 .8 V9.5" stroke="#c9383f" stroke-width="1.5" stroke-linecap="round"/><path d="M1.2 1 H8.8 L7 3.5 L8.8 6 H1.2Z" fill="#c9383f"/></svg>
<div class="t" style="left:736.4px;top:187.9px;height:20px;line-height:20px;font-size:10.76px;color:#2a2e34;font-weight:400;-webkit-text-stroke:.1px #2a2e34">Urgent</div>
<div style="position:absolute;left:793.9px;top:189.20000000000002px;width:73.8px;height:17.4px;background:#0f8a45;border-radius:3.5px"></div>
<svg style="position:absolute;left:797.90px;top:192.40px;" width="11.00" height="11.00" viewBox="0 0 11 11" fill="none"><circle cx="5.5" cy="5.5" r="5" fill="#fff"/><path d="M3.3 5.6 L4.9 7.1 L7.7 4.2" stroke="#0f8a45" stroke-width="1.3" stroke-linecap="round" stroke-linejoin="round"/></svg>
<div class="t" style="left:813.7px;top:191.9px;height:12px;line-height:12px;font-size:8.7px;color:#fff;font-weight:400;-webkit-text-stroke:.22px #fff">COMPLETE</div>
<svg style="position:absolute;left:892.00px;top:191.60px;" width="12.00" height="12.00" viewBox="0 0 12 12" fill="none"><path d="M6 1.2 Q10.8 1.2 10.8 6 Q10.8 7.6 10 8.7 L10.6 10.9 L8.4 10.3 Q7.3 10.8 6 10.8 Q1.2 10.8 1.2 6 Q1.2 1.2 6 1.2Z" stroke="#87909e" stroke-width="1.1" stroke-linejoin="round"/></svg>
<svg style="position:absolute;left:975.50px;top:195.90px;" width="10.00" height="4.00" viewBox="0 0 10 4" fill="none"><circle cx="1.5" cy="2" r="0.9" fill="#3d434d"/><circle cx="4.8" cy="2" r="0.9" fill="#3d434d"/><circle cx="8.1" cy="2" r="0.9" fill="#3d434d"/></svg>
<div style="position:absolute;left:225px;top:210px;width:1019px;height:1px;background:#eef0f2"></div>
<svg style="position:absolute;left:244.70px;top:217.40px;" width="13.00" height="13.00" viewBox="0 0 13 13" fill="none"><circle cx="6.5" cy="6.5" r="6" fill="#0f8a45"/><path d="M4 6.6 L5.8 8.3 L9 5" stroke="#fff" stroke-width="1.3" stroke-linecap="round" stroke-linejoin="round"/></svg>
<div class="t" style="left:266.2px;top:213.9px;height:20px;line-height:20px;font-size:11px;color:#2a2e34;font-weight:400;-webkit-text-stroke:.15px #2a2e34">Add Peer-to-Peer Transfer</div>
<div style="position:absolute;left:568.6px;top:214.9px;width:18px;height:18px;background:#7b68ee;border-radius:50%"></div>
<div class="t" style="left:568.6px;top:218.9px;height:10px;line-height:10px;font-size:7.9px;color:#d3cbf9;font-weight:400;width:18px;text-align:center;-webkit-text-stroke:.15px #d3cbf9">JD</div>
<svg style="position:absolute;left:646.50px;top:217.90px;" width="11.00" height="12.00" viewBox="0 0 11 12" fill="none"><path d="M5.2 10.5 H2.5 Q1.2 10.5 1.2 9.2 V3.5 Q1.2 2.2 2.5 2.2 H8.5 Q9.8 2.2 9.8 3.5 V6" stroke="#87909e" stroke-width="1.1" stroke-linecap="round"/><path d="M1.2 4.8H9.8M3.5 1V3M7.5 1V3" stroke="#87909e" stroke-width="1.1" stroke-linecap="round"/><path d="M8.3 7.5V11M6.6 9.3H10" stroke="#87909e" stroke-width="1.1" stroke-linecap="round"/></svg>
<svg style="position:absolute;left:719.70px;top:219.10px;" width="10.00" height="10.00" viewBox="0 0 10 10" fill="none"><path d="M1 .8 V9.5" stroke="#dba21a" stroke-width="1.5" stroke-linecap="round"/><path d="M1.2 1 H8.8 L7 3.5 L8.8 6 H1.2Z" fill="#dba21a"/></svg>
<div class="t" style="left:736.4px;top:213.9px;height:20px;line-height:20px;font-size:10.76px;color:#2a2e34;font-weight:400;-webkit-text-stroke:.1px #2a2e34">High</div>
<div style="position:absolute;left:793.9px;top:215.20000000000002px;width:73.8px;height:17.4px;background:#0f8a45;border-radius:3.5px"></div>
<svg style="position:absolute;left:797.90px;top:218.40px;" width="11.00" height="11.00" viewBox="0 0 11 11" fill="none"><circle cx="5.5" cy="5.5" r="5" fill="#fff"/><path d="M3.3 5.6 L4.9 7.1 L7.7 4.2" stroke="#0f8a45" stroke-width="1.3" stroke-linecap="round" stroke-linejoin="round"/></svg>
<div class="t" style="left:813.7px;top:217.9px;height:12px;line-height:12px;font-size:8.7px;color:#fff;font-weight:400;-webkit-text-stroke:.22px #fff">COMPLETE</div>
<svg style="position:absolute;left:892.00px;top:217.60px;" width="12.00" height="12.00" viewBox="0 0 12 12" fill="none"><path d="M6 1.2 Q10.8 1.2 10.8 6 Q10.8 7.6 10 8.7 L10.6 10.9 L8.4 10.3 Q7.3 10.8 6 10.8 Q1.2 10.8 1.2 6 Q1.2 1.2 6 1.2Z" stroke="#87909e" stroke-width="1.1" stroke-linejoin="round"/></svg>
<svg style="position:absolute;left:975.50px;top:221.90px;" width="10.00" height="4.00" viewBox="0 0 10 4" fill="none"><circle cx="1.5" cy="2" r="0.9" fill="#3d434d"/><circle cx="4.8" cy="2" r="0.9" fill="#3d434d"/><circle cx="8.1" cy="2" r="0.9" fill="#3d434d"/></svg>
<div style="position:absolute;left:225px;top:236px;width:1019px;height:1px;background:#eef0f2"></div>
<svg style="position:absolute;left:244.70px;top:243.40px;" width="13.00" height="13.00" viewBox="0 0 13 13" fill="none"><circle cx="6.5" cy="6.5" r="6" fill="#0f8a45"/><path d="M4 6.6 L5.8 8.3 L9 5" stroke="#fff" stroke-width="1.3" stroke-linecap="round" stroke-linejoin="round"/></svg>
<div class="t" style="left:266.2px;top:239.9px;height:20px;line-height:20px;font-size:11px;color:#2a2e34;font-weight:400;-webkit-text-stroke:.15px #2a2e34">Implement In-App Chat Support with Customer Service</div>
<div style="position:absolute;left:568.6px;top:240.9px;width:18px;height:18px;background:#7b68ee;border-radius:50%"></div>
<div class="t" style="left:568.6px;top:244.9px;height:10px;line-height:10px;font-size:7.9px;color:#d3cbf9;font-weight:400;width:18px;text-align:center;-webkit-text-stroke:.15px #d3cbf9">JD</div>
<svg style="position:absolute;left:646.50px;top:243.90px;" width="11.00" height="12.00" viewBox="0 0 11 12" fill="none"><path d="M5.2 10.5 H2.5 Q1.2 10.5 1.2 9.2 V3.5 Q1.2 2.2 2.5 2.2 H8.5 Q9.8 2.2 9.8 3.5 V6" stroke="#87909e" stroke-width="1.1" stroke-linecap="round"/><path d="M1.2 4.8H9.8M3.5 1V3M7.5 1V3" stroke="#87909e" stroke-width="1.1" stroke-linecap="round"/><path d="M8.3 7.5V11M6.6 9.3H10" stroke="#87909e" stroke-width="1.1" stroke-linecap="round"/></svg>
<svg style="position:absolute;left:719.70px;top:245.10px;" width="10.00" height="10.00" viewBox="0 0 10 10" fill="none"><path d="M1 .8 V9.5" stroke="#dba21a" stroke-width="1.5" stroke-linecap="round"/><path d="M1.2 1 H8.8 L7 3.5 L8.8 6 H1.2Z" fill="#dba21a"/></svg>
<div class="t" style="left:736.4px;top:239.9px;height:20px;line-height:20px;font-size:10.76px;color:#2a2e34;font-weight:400;-webkit-text-stroke:.1px #2a2e34">High</div>
<div style="position:absolute;left:793.9px;top:241.20000000000002px;width:73.8px;height:17.4px;background:#0f8a45;border-radius:3.5px"></div>
<svg style="position:absolute;left:797.90px;top:244.40px;" width="11.00" height="11.00" viewBox="0 0 11 11" fill="none"><circle cx="5.5" cy="5.5" r="5" fill="#fff"/><path d="M3.3 5.6 L4.9 7.1 L7.7 4.2" stroke="#0f8a45" stroke-width="1.3" stroke-linecap="round" stroke-linejoin="round"/></svg>
<div class="t" style="left:813.7px;top:243.9px;height:12px;line-height:12px;font-size:8.7px;color:#fff;font-weight:400;-webkit-text-stroke:.22px #fff">COMPLETE</div>
<svg style="position:absolute;left:892.00px;top:243.60px;" width="12.00" height="12.00" viewBox="0 0 12 12" fill="none"><path d="M6 1.2 Q10.8 1.2 10.8 6 Q10.8 7.6 10 8.7 L10.6 10.9 L8.4 10.3 Q7.3 10.8 6 10.8 Q1.2 10.8 1.2 6 Q1.2 1.2 6 1.2Z" stroke="#87909e" stroke-width="1.1" stroke-linejoin="round"/></svg>
<svg style="position:absolute;left:975.50px;top:247.90px;" width="10.00" height="4.00" viewBox="0 0 10 4" fill="none"><circle cx="1.5" cy="2" r="0.9" fill="#3d434d"/><circle cx="4.8" cy="2" r="0.9" fill="#3d434d"/><circle cx="8.1" cy="2" r="0.9" fill="#3d434d"/></svg>
<div style="position:absolute;left:225px;top:262px;width:1019px;height:1px;background:#eef0f2"></div>
<svg style="position:absolute;left:244.70px;top:269.40px;" width="13.00" height="13.00" viewBox="0 0 13 13" fill="none"><circle cx="6.5" cy="6.5" r="6" fill="#0f8a45"/><path d="M4 6.6 L5.8 8.3 L9 5" stroke="#fff" stroke-width="1.3" stroke-linecap="round" stroke-linejoin="round"/></svg>
<div class="t" style="left:266.2px;top:265.9px;height:20px;line-height:20px;font-size:11px;color:#2a2e34;font-weight:400;-webkit-text-stroke:.15px #2a2e34">Enable Payment Confirmation Notifications &amp; Receipts</div>
<div style="position:absolute;left:568.6px;top:266.9px;width:18px;height:18px;background:#7b68ee;border-radius:50%"></div>
<div class="t" style="left:568.6px;top:270.9px;height:10px;line-height:10px;font-size:7.9px;color:#d3cbf9;font-weight:400;width:18px;text-align:center;-webkit-text-stroke:.15px #d3cbf9">JD</div>
<svg style="position:absolute;left:646.50px;top:269.90px;" width="11.00" height="12.00" viewBox="0 0 11 12" fill="none"><path d="M5.2 10.5 H2.5 Q1.2 10.5 1.2 9.2 V3.5 Q1.2 2.2 2.5 2.2 H8.5 Q9.8 2.2 9.8 3.5 V6" stroke="#87909e" stroke-width="1.1" stroke-linecap="round"/><path d="M1.2 4.8H9.8M3.5 1V3M7.5 1V3" stroke="#87909e" stroke-width="1.1" stroke-linecap="round"/><path d="M8.3 7.5V11M6.6 9.3H10" stroke="#87909e" stroke-width="1.1" stroke-linecap="round"/></svg>
<svg style="position:absolute;left:719.70px;top:271.10px;" width="10.00" height="10.00" viewBox="0 0 10 10" fill="none"><path d="M1 .8 V9.5" stroke="#c9383f" stroke-width="1.5" stroke-linecap="round"/><path d="M1.2 1 H8.8 L7 3.5 L8.8 6 H1.2Z" fill="#c9383f"/></svg>
<div class="t" style="left:736.4px;top:265.9px;height:20px;line-height:20px;font-size:10.76px;color:#2a2e34;font-weight:400;-webkit-text-stroke:.1px #2a2e34">Urgent</div>
<div style="position:absolute;left:793.9px;top:267.2px;width:73.8px;height:17.4px;background:#0f8a45;border-radius:3.5px"></div>
<svg style="position:absolute;left:797.90px;top:270.40px;" width="11.00" height="11.00" viewBox="0 0 11 11" fill="none"><circle cx="5.5" cy="5.5" r="5" fill="#fff"/><path d="M3.3 5.6 L4.9 7.1 L7.7 4.2" stroke="#0f8a45" stroke-width="1.3" stroke-linecap="round" stroke-linejoin="round"/></svg>
<div class="t" style="left:813.7px;top:269.9px;height:12px;line-height:12px;font-size:8.7px;color:#fff;font-weight:400;-webkit-text-stroke:.22px #fff">COMPLETE</div>
<svg style="position:absolute;left:892.00px;top:269.60px;" width="12.00" height="12.00" viewBox="0 0 12 12" fill="none"><path d="M6 1.2 Q10.8 1.2 10.8 6 Q10.8 7.6 10 8.7 L10.6 10.9 L8.4 10.3 Q7.3 10.8 6 10.8 Q1.2 10.8 1.2 6 Q1.2 1.2 6 1.2Z" stroke="#87909e" stroke-width="1.1" stroke-linejoin="round"/></svg>
<svg style="position:absolute;left:975.50px;top:273.90px;" width="10.00" height="4.00" viewBox="0 0 10 4" fill="none"><circle cx="1.5" cy="2" r="0.9" fill="#3d434d"/><circle cx="4.8" cy="2" r="0.9" fill="#3d434d"/><circle cx="8.1" cy="2" r="0.9" fill="#3d434d"/></svg>
<div style="position:absolute;left:225px;top:288px;width:1019px;height:1px;background:#eef0f2"></div>
<svg style="position:absolute;left:247.30px;top:297.20px;" width="8.00" height="8.00" viewBox="0 0 8 8" fill="none"><path d="M4 .4V7.6M.4 4H7.6" stroke="#87909e" stroke-width="1" stroke-linecap="round"/></svg>
<div class="t" style="left:266.2px;top:291.5px;height:20px;line-height:20px;font-size:10.7px;color:#87909e;font-weight:400;">Add Task</div>
<svg style="position:absolute;left:207.00px;top:340.00px;" width="7.00" height="5.00" viewBox="0 0 7 5" fill="none"><path d="M.5 .5 H6.5 L3.5 4.3Z" fill="#656f7d"/></svg>
<div style="position:absolute;left:224.7px;top:333.3px;width:84.3px;height:17.4px;background:#1a8fe0;border-radius:3.5px"></div>
<svg style="position:absolute;left:228.70px;top:336.50px;" width="11.00" height="11.00" viewBox="0 0 11 11" fill="none"><circle cx="5.5" cy="5.5" r="4.6" stroke="#fff" stroke-width="1.1"/><circle cx="5.5" cy="5.5" r="2.9" fill="#fff"/></svg>
<div class="t" style="left:244px;top:336.0px;height:12px;line-height:12px;font-size:8.7px;color:#fff;font-weight:400;-webkit-text-stroke:.22px #fff">IN PROGRESS</div>
<div class="t" style="left:320.6px;top:332.6px;height:20px;line-height:20px;font-size:9.6px;color:#656f7d;font-weight:400;">3</div>
<svg style="position:absolute;left:335.10px;top:340.30px;" width="10.00" height="4.00" viewBox="0 0 10 4" fill="none"><circle cx="1.5" cy="2" r="1" fill="#5f6672"/><circle cx="4.9" cy="2" r="1" fill="#5f6672"/><circle cx="8.3" cy="2" r="1" fill="#5f6672"/></svg>
<svg style="position:absolute;left:354.10px;top:338.00px;" width="8.00" height="8.00" viewBox="0 0 8 8" fill="none"><path d="M4 .5V7.5M.5 4H7.5" stroke="#656f7d" stroke-width="1.1" stroke-linecap="round"/></svg>
<div class="t" style="left:367.40000000000003px;top:332.5px;height:20px;line-height:20px;font-size:9.3px;color:#656f7d;font-weight:400;">Add Task</div>
<div class="t" style="left:227.7px;top:356.6px;height:20px;line-height:20px;font-size:9.1px;color:#6f7783;font-weight:400;">Name</div>
<div class="t" style="left:571.5px;top:356.6px;height:20px;line-height:20px;font-size:9.1px;color:#6f7783;font-weight:400;">Assignee</div>
<div class="t" style="left:646.3px;top:356.6px;height:20px;line-height:20px;font-size:9.2px;color:#6f7783;font-weight:400;">Due date</div>
<div class="t" style="left:720.2px;top:356.6px;height:20px;line-height:20px;font-size:9.4px;color:#6f7783;font-weight:400;">Priority</div>
<div class="t" style="left:794px;top:356.6px;height:20px;line-height:20px;font-size:9.3px;color:#6f7783;font-weight:400;">Status</div>
<div class="t" style="left:892px;top:356.6px;height:20px;line-height:20px;font-size:9.15px;color:#6f7783;font-weight:400;">Comments</div>
<svg style="position:absolute;left:975.00px;top:361.10px;" width="11.00" height="11.00" viewBox="0 0 11 11" fill="none"><circle cx="5.5" cy="5.5" r="4.8" stroke="#5f6672" stroke-width="1.1"/><path d="M5.5 3.2V7.8M3.2 5.5H7.8" stroke="#5f6672" stroke-width="1.1" stroke-linecap="round"/></svg>
<div style="position:absolute;left:225px;top:378px;width:1019px;height:1px;background:#eef0f2"></div>
<div style="position:absolute;left:968px;top:356.6px;width:1px;height:20px;background:#f4f5f7"></div>
<svg style="position:absolute;left:244.70px;top:384.80px;" width="13.00" height="13.00" viewBox="0 0 13 13" fill="none"><circle cx="6.5" cy="6.5" r="5.6" stroke="#1a8fe0" stroke-width="1.2"/><circle cx="6.5" cy="6.5" r="3.6" fill="#1a8fe0"/></svg>
<div class="t" style="left:266.2px;top:381.3px;height:20px;line-height:20px;font-size:11px;color:#2a2e34;font-weight:400;-webkit-text-stroke:.15px #2a2e34">Implement Multi-Factor Authentication</div>
<div style="position:absolute;left:568.6px;top:382.3px;width:18px;height:18px;background:#7b68ee;border-radius:50%"></div>
<div class="t" style="left:568.6px;top:386.3px;height:10px;line-height:10px;font-size:7.9px;color:#d3cbf9;font-weight:400;width:18px;text-align:center;-webkit-text-stroke:.15px #d3cbf9">JD</div>
<svg style="position:absolute;left:646.50px;top:385.30px;" width="11.00" height="12.00" viewBox="0 0 11 12" fill="none"><path d="M5.2 10.5 H2.5 Q1.2 10.5 1.2 9.2 V3.5 Q1.2 2.2 2.5 2.2 H8.5 Q9.8 2.2 9.8 3.5 V6" stroke="#87909e" stroke-width="1.1" stroke-linecap="round"/><path d="M1.2 4.8H9.8M3.5 1V3M7.5 1V3" stroke="#87909e" stroke-width="1.1" stroke-linecap="round"/><path d="M8.3 7.5V11M6.6 9.3H10" stroke="#87909e" stroke-width="1.1" stroke-linecap="round"/></svg>
<svg style="position:absolute;left:719.70px;top:386.50px;" width="10.00" height="10.00" viewBox="0 0 10 10" fill="none"><path d="M1 .8 V9.5" stroke="#4d6bfe" stroke-width="1.5" stroke-linecap="round"/><path d="M1.2 1 H8.8 L7 3.5 L8.8 6 H1.2Z" fill="#4d6bfe"/></svg>
<div class="t" style="left:736.4px;top:381.3px;height:20px;line-height:20px;font-size:10.76px;color:#2a2e34;font-weight:400;-webkit-text-stroke:.1px #2a2e34">Normal</div>
<div style="position:absolute;left:793.9px;top:382.6px;width:80px;height:17.4px;background:#1a8fe0;border-radius:3.5px"></div>
<svg style="position:absolute;left:797.90px;top:385.80px;" width="11.00" height="11.00" viewBox="0 0 11 11" fill="none"><circle cx="5.5" cy="5.5" r="4.6" stroke="#fff" stroke-width="1.1"/><circle cx="5.5" cy="5.5" r="2.9" fill="#fff"/></svg>
<div class="t" style="left:813.7px;top:385.3px;height:12px;line-height:12px;font-size:8.7px;color:#fff;font-weight:400;-webkit-text-stroke:.22px #fff">IN PROGR...</div>
<svg style="position:absolute;left:892.00px;top:385.00px;" width="12.00" height="12.00" viewBox="0 0 12 12" fill="none"><path d="M6 1.2 Q10.8 1.2 10.8 6 Q10.8 7.6 10 8.7 L10.6 10.9 L8.4 10.3 Q7.3 10.8 6 10.8 Q1.2 10.8 1.2 6 Q1.2 1.2 6 1.2Z" stroke="#87909e" stroke-width="1.1" stroke-linejoin="round"/></svg>
<svg style="position:absolute;left:975.50px;top:389.30px;" width="10.00" height="4.00" viewBox="0 0 10 4" fill="none"><circle cx="1.5" cy="2" r="0.9" fill="#3d434d"/><circle cx="4.8" cy="2" r="0.9" fill="#3d434d"/><circle cx="8.1" cy="2" r="0.9" fill="#3d434d"/></svg>
<div style="position:absolute;left:225px;top:404px;width:1019px;height:1px;background:#eef0f2"></div>
<svg style="position:absolute;left:244.70px;top:410.80px;" width="13.00" height="13.00" viewBox="0 0 13 13" fill="none"><circle cx="6.5" cy="6.5" r="5.6" stroke="#1a8fe0" stroke-width="1.2"/><circle cx="6.5" cy="6.5" r="3.6" fill="#1a8fe0"/></svg>
<div class="t" style="left:266.2px;top:407.3px;height:20px;line-height:20px;font-size:11px;color:#2a2e34;font-weight:400;-webkit-text-stroke:.15px #2a2e34">Add Customizable Quick Actions on Home Screen</div>
<div style="position:absolute;left:568.6px;top:408.3px;width:18px;height:18px;background:#7b68ee;border-radius:50%"></div>
<div class="t" style="left:568.6px;top:412.3px;height:10px;line-height:10px;font-size:7.9px;color:#d3cbf9;font-weight:400;width:18px;text-align:center;-webkit-text-stroke:.15px #d3cbf9">JD</div>
<svg style="position:absolute;left:646.50px;top:411.30px;" width="11.00" height="12.00" viewBox="0 0 11 12" fill="none"><path d="M5.2 10.5 H2.5 Q1.2 10.5 1.2 9.2 V3.5 Q1.2 2.2 2.5 2.2 H8.5 Q9.8 2.2 9.8 3.5 V6" stroke="#87909e" stroke-width="1.1" stroke-linecap="round"/><path d="M1.2 4.8H9.8M3.5 1V3M7.5 1V3" stroke="#87909e" stroke-width="1.1" stroke-linecap="round"/><path d="M8.3 7.5V11M6.6 9.3H10" stroke="#87909e" stroke-width="1.1" stroke-linecap="round"/></svg>
<svg style="position:absolute;left:719.70px;top:412.50px;" width="10.00" height="10.00" viewBox="0 0 10 10" fill="none"><path d="M1 .8 V9.5" stroke="#4d6bfe" stroke-width="1.5" stroke-linecap="round"/><path d="M1.2 1 H8.8 L7 3.5 L8.8 6 H1.2Z" fill="#4d6bfe"/></svg>
<div class="t" style="left:736.4px;top:407.3px;height:20px;line-height:20px;font-size:10.76px;color:#2a2e34;font-weight:400;-webkit-text-stroke:.1px #2a2e34">Normal</div>
<div style="position:absolute;left:793.9px;top:408.6px;width:80px;height:17.4px;background:#1a8fe0;border-radius:3.5px"></div>
<svg style="position:absolute;left:797.90px;top:411.80px;" width="11.00" height="11.00" viewBox="0 0 11 11" fill="none"><circle cx="5.5" cy="5.5" r="4.6" stroke="#fff" stroke-width="1.1"/><circle cx="5.5" cy="5.5" r="2.9" fill="#fff"/></svg>
<div class="t" style="left:813.7px;top:411.3px;height:12px;line-height:12px;font-size:8.7px;color:#fff;font-weight:400;-webkit-text-stroke:.22px #fff">IN PROGR...</div>
<svg style="position:absolute;left:892.00px;top:411.00px;" width="12.00" height="12.00" viewBox="0 0 12 12" fill="none"><path d="M6 1.2 Q10.8 1.2 10.8 6 Q10.8 7.6 10 8.7 L10.6 10.9 L8.4 10.3 Q7.3 10.8 6 10.8 Q1.2 10.8 1.2 6 Q1.2 1.2 6 1.2Z" stroke="#87909e" stroke-width="1.1" stroke-linejoin="round"/></svg>
<svg style="position:absolute;left:975.50px;top:415.30px;" width="10.00" height="4.00" viewBox="0 0 10 4" fill="none"><circle cx="1.5" cy="2" r="0.9" fill="#3d434d"/><circle cx="4.8" cy="2" r="0.9" fill="#3d434d"/><circle cx="8.1" cy="2" r="0.9" fill="#3d434d"/></svg>
<div style="position:absolute;left:225px;top:430px;width:1019px;height:1px;background:#eef0f2"></div>
<svg style="position:absolute;left:244.70px;top:436.80px;" width="13.00" height="13.00" viewBox="0 0 13 13" fill="none"><circle cx="6.5" cy="6.5" r="5.6" stroke="#1a8fe0" stroke-width="1.2"/><circle cx="6.5" cy="6.5" r="3.6" fill="#1a8fe0"/></svg>
<div class="t" style="left:266.2px;top:433.3px;height:20px;line-height:20px;font-size:11px;color:#2a2e34;font-weight:400;-webkit-text-stroke:.15px #2a2e34">Create Flow for Linking Multiple Bank Accounts</div>
<div style="position:absolute;left:568.6px;top:434.3px;width:18px;height:18px;background:#7b68ee;border-radius:50%"></div>
<div class="t" style="left:568.6px;top:438.3px;height:10px;line-height:10px;font-size:7.9px;color:#d3cbf9;font-weight:400;width:18px;text-align:center;-webkit-text-stroke:.15px #d3cbf9">JD</div>
<svg style="position:absolute;left:646.50px;top:437.30px;" width="11.00" height="12.00" viewBox="0 0 11 12" fill="none"><path d="M5.2 10.5 H2.5 Q1.2 10.5 1.2 9.2 V3.5 Q1.2 2.2 2.5 2.2 H8.5 Q9.8 2.2 9.8 3.5 V6" stroke="#87909e" stroke-width="1.1" stroke-linecap="round"/><path d="M1.2 4.8H9.8M3.5 1V3M7.5 1V3" stroke="#87909e" stroke-width="1.1" stroke-linecap="round"/><path d="M8.3 7.5V11M6.6 9.3H10" stroke="#87909e" stroke-width="1.1" stroke-linecap="round"/></svg>
<svg style="position:absolute;left:719.70px;top:438.50px;" width="10.00" height="10.00" viewBox="0 0 10 10" fill="none"><path d="M1 .8 V9.5" stroke="#dba21a" stroke-width="1.5" stroke-linecap="round"/><path d="M1.2 1 H8.8 L7 3.5 L8.8 6 H1.2Z" fill="#dba21a"/></svg>
<div class="t" style="left:736.4px;top:433.3px;height:20px;line-height:20px;font-size:10.76px;color:#2a2e34;font-weight:400;-webkit-text-stroke:.1px #2a2e34">High</div>
<div style="position:absolute;left:793.9px;top:434.6px;width:80px;height:17.4px;background:#1a8fe0;border-radius:3.5px"></div>
<svg style="position:absolute;left:797.90px;top:437.80px;" width="11.00" height="11.00" viewBox="0 0 11 11" fill="none"><circle cx="5.5" cy="5.5" r="4.6" stroke="#fff" stroke-width="1.1"/><circle cx="5.5" cy="5.5" r="2.9" fill="#fff"/></svg>
<div class="t" style="left:813.7px;top:437.3px;height:12px;line-height:12px;font-size:8.7px;color:#fff;font-weight:400;-webkit-text-stroke:.22px #fff">IN PROGR...</div>
<svg style="position:absolute;left:892.00px;top:437.00px;" width="12.00" height="12.00" viewBox="0 0 12 12" fill="none"><path d="M6 1.2 Q10.8 1.2 10.8 6 Q10.8 7.6 10 8.7 L10.6 10.9 L8.4 10.3 Q7.3 10.8 6 10.8 Q1.2 10.8 1.2 6 Q1.2 1.2 6 1.2Z" stroke="#87909e" stroke-width="1.1" stroke-linejoin="round"/></svg>
<svg style="position:absolute;left:975.50px;top:441.30px;" width="10.00" height="4.00" viewBox="0 0 10 4" fill="none"><circle cx="1.5" cy="2" r="0.9" fill="#3d434d"/><circle cx="4.8" cy="2" r="0.9" fill="#3d434d"/><circle cx="8.1" cy="2" r="0.9" fill="#3d434d"/></svg>
<div style="position:absolute;left:225px;top:456px;width:1019px;height:1px;background:#eef0f2"></div>
<svg style="position:absolute;left:247.30px;top:465.20px;" width="8.00" height="8.00" viewBox="0 0 8 8" fill="none"><path d="M4 .4V7.6M.4 4H7.6" stroke="#87909e" stroke-width="1" stroke-linecap="round"/></svg>
<div class="t" style="left:266.2px;top:459.5px;height:20px;line-height:20px;font-size:10.7px;color:#87909e;font-weight:400;">Add Task</div>
<svg style="position:absolute;left:207.00px;top:507.40px;" width="7.00" height="5.00" viewBox="0 0 7 5" fill="none"><path d="M.5 .5 H6.5 L3.5 4.3Z" fill="#656f7d"/></svg>
<div style="position:absolute;left:224.7px;top:500.7px;width:53.1px;height:17.4px;background:#e8eaed;border-radius:3.5px"></div>
<svg style="position:absolute;left:228.70px;top:503.90px;" width="11.00" height="11.00" viewBox="0 0 11 11" fill="none"><circle cx="5.5" cy="5.5" r="4.6" stroke="#87909e" stroke-width="1.1"/><circle cx="5.5" cy="5.5" r="2.9" fill="#87909e"/></svg>
<div class="t" style="left:244px;top:503.4px;height:12px;line-height:12px;font-size:8.7px;color:#4f5762;font-weight:400;-webkit-text-stroke:.22px #4f5762">TO DO</div>
<div class="t" style="left:289.40000000000003px;top:500.0px;height:20px;line-height:20px;font-size:9.6px;color:#656f7d;font-weight:400;">5</div>
<svg style="position:absolute;left:303.90px;top:507.70px;" width="10.00" height="4.00" viewBox="0 0 10 4" fill="none"><circle cx="1.5" cy="2" r="1" fill="#5f6672"/><circle cx="4.9" cy="2" r="1" fill="#5f6672"/><circle cx="8.3" cy="2" r="1" fill="#5f6672"/></svg>
<svg style="position:absolute;left:322.90px;top:505.40px;" width="8.00" height="8.00" viewBox="0 0 8 8" fill="none"><path d="M4 .5V7.5M.5 4H7.5" stroke="#656f7d" stroke-width="1.1" stroke-linecap="round"/></svg>
<div class="t" style="left:336.20000000000005px;top:499.9px;height:20px;line-height:20px;font-size:9.3px;color:#656f7d;font-weight:400;">Add Task</div>
<div class="t" style="left:227.7px;top:523.6px;height:20px;line-height:20px;font-size:9.1px;color:#6f7783;font-weight:400;">Name</div>
<div class="t" style="left:571.5px;top:523.6px;height:20px;line-height:20px;font-size:9.1px;color:#6f7783;font-weight:400;">Assignee</div>
<div class="t" style="left:646.3px;top:523.6px;height:20px;line-height:20px;font-size:9.2px;color:#6f7783;font-weight:400;">Due date</div>
<div class="t" style="left:720.2px;top:523.6px;height:20px;line-height:20px;font-size:9.4px;color:#6f7783;font-weight:400;">Priority</div>
<div class="t" style="left:794px;top:523.6px;height:20px;line-height:20px;font-size:9.3px;color:#6f7783;font-weight:400;">Status</div>
<div class="t" style="left:892px;top:523.6px;height:20px;line-height:20px;font-size:9.15px;color:#6f7783;font-weight:400;">Comments</div>
<svg style="position:absolute;left:975.00px;top:528.10px;" width="11.00" height="11.00" viewBox="0 0 11 11" fill="none"><circle cx="5.5" cy="5.5" r="4.8" stroke="#5f6672" stroke-width="1.1"/><path d="M5.5 3.2V7.8M3.2 5.5H7.8" stroke="#5f6672" stroke-width="1.1" stroke-linecap="round"/></svg>
<div style="position:absolute;left:225px;top:545px;width:1019px;height:1px;background:#eef0f2"></div>
<div style="position:absolute;left:968px;top:523.6px;width:1px;height:20px;background:#f4f5f7"></div>
<svg style="position:absolute;left:244.70px;top:551.70px;" width="13.00" height="13.00" viewBox="0 0 13 13" fill="none"><circle cx="6.5" cy="6.5" r="5.6" stroke="#87909e" stroke-width="1.2"/><circle cx="6.5" cy="6.5" r="3.6" fill="#87909e"/></svg>
<div class="t" style="left:266.2px;top:548.2px;height:20px;line-height:20px;font-size:11px;color:#2a2e34;font-weight:400;-webkit-text-stroke:.15px #2a2e34">Integrate Face ID Authentication</div>
<div style="position:absolute;left:568.6px;top:549.2px;width:18px;height:18px;background:#7b68ee;border-radius:50%"></div>
<div class="t" style="left:568.6px;top:553.2px;height:10px;line-height:10px;font-size:7.9px;color:#d3cbf9;font-weight:400;width:18px;text-align:center;-webkit-text-stroke:.15px #d3cbf9">JD</div>
<svg style="position:absolute;left:646.50px;top:552.20px;" width="11.00" height="12.00" viewBox="0 0 11 12" fill="none"><path d="M5.2 10.5 H2.5 Q1.2 10.5 1.2 9.2 V3.5 Q1.2 2.2 2.5 2.2 H8.5 Q9.8 2.2 9.8 3.5 V6" stroke="#87909e" stroke-width="1.1" stroke-linecap="round"/><path d="M1.2 4.8H9.8M3.5 1V3M7.5 1V3" stroke="#87909e" stroke-width="1.1" stroke-linecap="round"/><path d="M8.3 7.5V11M6.6 9.3H10" stroke="#87909e" stroke-width="1.1" stroke-linecap="round"/></svg>
<svg style="position:absolute;left:719.70px;top:553.40px;" width="10.00" height="10.00" viewBox="0 0 10 10" fill="none"><path d="M1 .8 V9.5" stroke="#87909e" stroke-width="1.5" stroke-linecap="round"/><path d="M1.2 1 H8.8 L7 3.5 L8.8 6 H1.2Z" fill="#87909e"/></svg>
<div class="t" style="left:736.4px;top:548.2px;height:20px;line-height:20px;font-size:10.76px;color:#2a2e34;font-weight:400;-webkit-text-stroke:.1px #2a2e34">Low</div>
<div style="position:absolute;left:793.9px;top:549.5px;width:53px;height:17.4px;background:#e8eaed;border-radius:3.5px"></div>
<svg style="position:absolute;left:797.90px;top:552.70px;" width="11.00" height="11.00" viewBox="0 0 11 11" fill="none"><circle cx="5.5" cy="5.5" r="4.6" stroke="#87909e" stroke-width="1.1"/><circle cx="5.5" cy="5.5" r="2.9" fill="#87909e"/></svg>
<div class="t" style="left:813.7px;top:552.2px;height:12px;line-height:12px;font-size:8.7px;color:#4f5762;font-weight:400;-webkit-text-stroke:.22px #4f5762">TO DO</div>
<svg style="position:absolute;left:892.00px;top:551.90px;" width="12.00" height="12.00" viewBox="0 0 12 12" fill="none"><path d="M6 1.2 Q10.8 1.2 10.8 6 Q10.8 7.6 10 8.7 L10.6 10.9 L8.4 10.3 Q7.3 10.8 6 10.8 Q1.2 10.8 1.2 6 Q1.2 1.2 6 1.2Z" stroke="#87909e" stroke-width="1.1" stroke-linejoin="round"/></svg>
<svg style="position:absolute;left:975.50px;top:556.20px;" width="10.00" height="4.00" viewBox="0 0 10 4" fill="none"><circle cx="1.5" cy="2" r="0.9" fill="#3d434d"/><circle cx="4.8" cy="2" r="0.9" fill="#3d434d"/><circle cx="8.1" cy="2" r="0.9" fill="#3d434d"/></svg>
<div style="position:absolute;left:225px;top:571px;width:1019px;height:1px;background:#eef0f2"></div>
<svg style="position:absolute;left:244.70px;top:577.70px;" width="13.00" height="13.00" viewBox="0 0 13 13" fill="none"><circle cx="6.5" cy="6.5" r="5.6" stroke="#87909e" stroke-width="1.2"/><circle cx="6.5" cy="6.5" r="3.6" fill="#87909e"/></svg>
<div class="t" style="left:266.2px;top:574.2px;height:20px;line-height:20px;font-size:11px;color:#2a2e34;font-weight:400;-webkit-text-stroke:.15px #2a2e34">Integrate Fingerprint Authentication</div>
<div style="position:absolute;left:568.6px;top:575.2px;width:18px;height:18px;background:#7b68ee;border-radius:50%"></div>
<div class="t" style="left:568.6px;top:579.2px;height:10px;line-height:10px;font-size:7.9px;color:#d3cbf9;font-weight:400;width:18px;text-align:center;-webkit-text-stroke:.15px #d3cbf9">JD</div>
<svg style="position:absolute;left:646.50px;top:578.20px;" width="11.00" height="12.00" viewBox="0 0 11 12" fill="none"><path d="M5.2 10.5 H2.5 Q1.2 10.5 1.2 9.2 V3.5 Q1.2 2.2 2.5 2.2 H8.5 Q9.8 2.2 9.8 3.5 V6" stroke="#87909e" stroke-width="1.1" stroke-linecap="round"/><path d="M1.2 4.8H9.8M3.5 1V3M7.5 1V3" stroke="#87909e" stroke-width="1.1" stroke-linecap="round"/><path d="M8.3 7.5V11M6.6 9.3H10" stroke="#87909e" stroke-width="1.1" stroke-linecap="round"/></svg>
<svg style="position:absolute;left:719.70px;top:579.40px;" width="10.00" height="10.00" viewBox="0 0 10 10" fill="none"><path d="M1 .8 V9.5" stroke="#87909e" stroke-width="1.5" stroke-linecap="round"/><path d="M1.2 1 H8.8 L7 3.5 L8.8 6 H1.2Z" fill="#87909e"/></svg>
<div class="t" style="left:736.4px;top:574.2px;height:20px;line-height:20px;font-size:10.76px;color:#2a2e34;font-weight:400;-webkit-text-stroke:.1px #2a2e34">Low</div>
<div style="position:absolute;left:793.9px;top:575.5px;width:53px;height:17.4px;background:#e8eaed;border-radius:3.5px"></div>
<svg style="position:absolute;left:797.90px;top:578.70px;" width="11.00" height="11.00" viewBox="0 0 11 11" fill="none"><circle cx="5.5" cy="5.5" r="4.6" stroke="#87909e" stroke-width="1.1"/><circle cx="5.5" cy="5.5" r="2.9" fill="#87909e"/></svg>
<div class="t" style="left:813.7px;top:578.2px;height:12px;line-height:12px;font-size:8.7px;color:#4f5762;font-weight:400;-webkit-text-stroke:.22px #4f5762">TO DO</div>
<svg style="position:absolute;left:892.00px;top:577.90px;" width="12.00" height="12.00" viewBox="0 0 12 12" fill="none"><path d="M6 1.2 Q10.8 1.2 10.8 6 Q10.8 7.6 10 8.7 L10.6 10.9 L8.4 10.3 Q7.3 10.8 6 10.8 Q1.2 10.8 1.2 6 Q1.2 1.2 6 1.2Z" stroke="#87909e" stroke-width="1.1" stroke-linejoin="round"/></svg>
<svg style="position:absolute;left:975.50px;top:582.20px;" width="10.00" height="4.00" viewBox="0 0 10 4" fill="none"><circle cx="1.5" cy="2" r="0.9" fill="#3d434d"/><circle cx="4.8" cy="2" r="0.9" fill="#3d434d"/><circle cx="8.1" cy="2" r="0.9" fill="#3d434d"/></svg>
<div style="position:absolute;left:225px;top:597px;width:1019px;height:1px;background:#eef0f2"></div>
<svg style="position:absolute;left:244.70px;top:603.70px;" width="13.00" height="13.00" viewBox="0 0 13 13" fill="none"><circle cx="6.5" cy="6.5" r="5.6" stroke="#87909e" stroke-width="1.2"/><circle cx="6.5" cy="6.5" r="3.6" fill="#87909e"/></svg>
<div class="t" style="left:266.2px;top:600.2px;height:20px;line-height:20px;font-size:11px;color:#2a2e34;font-weight:400;-webkit-text-stroke:.15px #2a2e34">Design Transaction History with Filter and Search Options</div>
<div style="position:absolute;left:568.6px;top:601.2px;width:18px;height:18px;background:#7b68ee;border-radius:50%"></div>
<div class="t" style="left:568.6px;top:605.2px;height:10px;line-height:10px;font-size:7.9px;color:#d3cbf9;font-weight:400;width:18px;text-align:center;-webkit-text-stroke:.15px #d3cbf9">JD</div>
<svg style="position:absolute;left:646.50px;top:604.20px;" width="11.00" height="12.00" viewBox="0 0 11 12" fill="none"><path d="M5.2 10.5 H2.5 Q1.2 10.5 1.2 9.2 V3.5 Q1.2 2.2 2.5 2.2 H8.5 Q9.8 2.2 9.8 3.5 V6" stroke="#87909e" stroke-width="1.1" stroke-linecap="round"/><path d="M1.2 4.8H9.8M3.5 1V3M7.5 1V3" stroke="#87909e" stroke-width="1.1" stroke-linecap="round"/><path d="M8.3 7.5V11M6.6 9.3H10" stroke="#87909e" stroke-width="1.1" stroke-linecap="round"/></svg>
<svg style="position:absolute;left:719.70px;top:605.40px;" width="10.00" height="10.00" viewBox="0 0 10 10" fill="none"><path d="M1 .8 V9.5" stroke="#4d6bfe" stroke-width="1.5" stroke-linecap="round"/><path d="M1.2 1 H8.8 L7 3.5 L8.8 6 H1.2Z" fill="#4d6bfe"/></svg>
<div class="t" style="left:736.4px;top:600.2px;height:20px;line-height:20px;font-size:10.76px;color:#2a2e34;font-weight:400;-webkit-text-stroke:.1px #2a2e34">Normal</div>
<div style="position:absolute;left:793.9px;top:601.5px;width:53px;height:17.4px;background:#e8eaed;border-radius:3.5px"></div>
<svg style="position:absolute;left:797.90px;top:604.70px;" width="11.00" height="11.00" viewBox="0 0 11 11" fill="none"><circle cx="5.5" cy="5.5" r="4.6" stroke="#87909e" stroke-width="1.1"/><circle cx="5.5" cy="5.5" r="2.9" fill="#87909e"/></svg>
<div class="t" style="left:813.7px;top:604.2px;height:12px;line-height:12px;font-size:8.7px;color:#4f5762;font-weight:400;-webkit-text-stroke:.22px #4f5762">TO DO</div>
<svg style="position:absolute;left:892.00px;top:603.90px;" width="12.00" height="12.00" viewBox="0 0 12 12" fill="none"><path d="M6 1.2 Q10.8 1.2 10.8 6 Q10.8 7.6 10 8.7 L10.6 10.9 L8.4 10.3 Q7.3 10.8 6 10.8 Q1.2 10.8 1.2 6 Q1.2 1.2 6 1.2Z" stroke="#87909e" stroke-width="1.1" stroke-linejoin="round"/></svg>
<svg style="position:absolute;left:975.50px;top:608.20px;" width="10.00" height="4.00" viewBox="0 0 10 4" fill="none"><circle cx="1.5" cy="2" r="0.9" fill="#3d434d"/><circle cx="4.8" cy="2" r="0.9" fill="#3d434d"/><circle cx="8.1" cy="2" r="0.9" fill="#3d434d"/></svg>
<div style="position:absolute;left:225px;top:623px;width:1019px;height:1px;background:#eef0f2"></div>
<svg style="position:absolute;left:244.70px;top:629.70px;" width="13.00" height="13.00" viewBox="0 0 13 13" fill="none"><circle cx="6.5" cy="6.5" r="5.6" stroke="#87909e" stroke-width="1.2"/><circle cx="6.5" cy="6.5" r="3.6" fill="#87909e"/></svg>
<div class="t" style="left:266.2px;top:626.2px;height:20px;line-height:20px;font-size:11px;color:#2a2e34;font-weight:400;-webkit-text-stroke:.15px #2a2e34">Add QR Code Payments</div>
<div style="position:absolute;left:568.6px;top:627.2px;width:18px;height:18px;background:#7b68ee;border-radius:50%"></div>
<div class="t" style="left:568.6px;top:631.2px;height:10px;line-height:10px;font-size:7.9px;color:#d3cbf9;font-weight:400;width:18px;text-align:center;-webkit-text-stroke:.15px #d3cbf9">JD</div>
<svg style="position:absolute;left:646.50px;top:630.20px;" width="11.00" height="12.00" viewBox="0 0 11 12" fill="none"><path d="M5.2 10.5 H2.5 Q1.2 10.5 1.2 9.2 V3.5 Q1.2 2.2 2.5 2.2 H8.5 Q9.8 2.2 9.8 3.5 V6" stroke="#87909e" stroke-width="1.1" stroke-linecap="round"/><path d="M1.2 4.8H9.8M3.5 1V3M7.5 1V3" stroke="#87909e" stroke-width="1.1" stroke-linecap="round"/><path d="M8.3 7.5V11M6.6 9.3H10" stroke="#87909e" stroke-width="1.1" stroke-linecap="round"/></svg>
<svg style="position:absolute;left:719.70px;top:631.40px;" width="10.00" height="10.00" viewBox="0 0 10 10" fill="none"><path d="M1 .8 V9.5" stroke="#4d6bfe" stroke-width="1.5" stroke-linecap="round"/><path d="M1.2 1 H8.8 L7 3.5 L8.8 6 H1.2Z" fill="#4d6bfe"/></svg>
<div class="t" style="left:736.4px;top:626.2px;height:20px;line-height:20px;font-size:10.76px;color:#2a2e34;font-weight:400;-webkit-text-stroke:.1px #2a2e34">Normal</div>
<div style="position:absolute;left:793.9px;top:627.5px;width:53px;height:17.4px;background:#e8eaed;border-radius:3.5px"></div>
<svg style="position:absolute;left:797.90px;top:630.70px;" width="11.00" height="11.00" viewBox="0 0 11 11" fill="none"><circle cx="5.5" cy="5.5" r="4.6" stroke="#87909e" stroke-width="1.1"/><circle cx="5.5" cy="5.5" r="2.9" fill="#87909e"/></svg>
<div class="t" style="left:813.7px;top:630.2px;height:12px;line-height:12px;font-size:8.7px;color:#4f5762;font-weight:400;-webkit-text-stroke:.22px #4f5762">TO DO</div>
<svg style="position:absolute;left:892.00px;top:629.90px;" width="12.00" height="12.00" viewBox="0 0 12 12" fill="none"><path d="M6 1.2 Q10.8 1.2 10.8 6 Q10.8 7.6 10 8.7 L10.6 10.9 L8.4 10.3 Q7.3 10.8 6 10.8 Q1.2 10.8 1.2 6 Q1.2 1.2 6 1.2Z" stroke="#87909e" stroke-width="1.1" stroke-linejoin="round"/></svg>
<svg style="position:absolute;left:975.50px;top:634.20px;" width="10.00" height="4.00" viewBox="0 0 10 4" fill="none"><circle cx="1.5" cy="2" r="0.9" fill="#3d434d"/><circle cx="4.8" cy="2" r="0.9" fill="#3d434d"/><circle cx="8.1" cy="2" r="0.9" fill="#3d434d"/></svg>
<div style="position:absolute;left:225px;top:649px;width:1019px;height:1px;background:#eef0f2"></div>
<svg style="position:absolute;left:244.70px;top:655.70px;" width="13.00" height="13.00" viewBox="0 0 13 13" fill="none"><circle cx="6.5" cy="6.5" r="5.6" stroke="#87909e" stroke-width="1.2"/><circle cx="6.5" cy="6.5" r="3.6" fill="#87909e"/></svg>
<div class="t" style="left:266.2px;top:652.2px;height:20px;line-height:20px;font-size:11px;color:#2a2e34;font-weight:400;-webkit-text-stroke:.15px #2a2e34">Implement Theme Switching Feature</div>
<div style="position:absolute;left:568.6px;top:653.2px;width:18px;height:18px;background:#7b68ee;border-radius:50%"></div>
<div class="t" style="left:568.6px;top:657.2px;height:10px;line-height:10px;font-size:7.9px;color:#d3cbf9;font-weight:400;width:18px;text-align:center;-webkit-text-stroke:.15px #d3cbf9">JD</div>
<svg style="position:absolute;left:646.50px;top:656.20px;" width="11.00" height="12.00" viewBox="0 0 11 12" fill="none"><path d="M5.2 10.5 H2.5 Q1.2 10.5 1.2 9.2 V3.5 Q1.2 2.2 2.5 2.2 H8.5 Q9.8 2.2 9.8 3.5 V6" stroke="#87909e" stroke-width="1.1" stroke-linecap="round"/><path d="M1.2 4.8H9.8M3.5 1V3M7.5 1V3" stroke="#87909e" stroke-width="1.1" stroke-linecap="round"/><path d="M8.3 7.5V11M6.6 9.3H10" stroke="#87909e" stroke-width="1.1" stroke-linecap="round"/></svg>
<svg style="position:absolute;left:719.70px;top:657.40px;" width="10.00" height="10.00" viewBox="0 0 10 10" fill="none"><path d="M1 .8 V9.5" stroke="#87909e" stroke-width="1.5" stroke-linecap="round"/><path d="M1.2 1 H8.8 L7 3.5 L8.8 6 H1.2Z" fill="#87909e"/></svg>
<div class="t" style="left:736.4px;top:652.2px;height:20px;line-height:20px;font-size:10.76px;color:#2a2e34;font-weight:400;-webkit-text-stroke:.1px #2a2e34">Low</div>
<div style="position:absolute;left:793.9px;top:653.5px;width:53px;height:17.4px;background:#e8eaed;border-radius:3.5px"></div>
<svg style="position:absolute;left:797.90px;top:656.70px;" width="11.00" height="11.00" viewBox="0 0 11 11" fill="none"><circle cx="5.5" cy="5.5" r="4.6" stroke="#87909e" stroke-width="1.1"/><circle cx="5.5" cy="5.5" r="2.9" fill="#87909e"/></svg>
<div class="t" style="left:813.7px;top:656.2px;height:12px;line-height:12px;font-size:8.7px;color:#4f5762;font-weight:400;-webkit-text-stroke:.22px #4f5762">TO DO</div>
<svg style="position:absolute;left:892.00px;top:655.90px;" width="12.00" height="12.00" viewBox="0 0 12 12" fill="none"><path d="M6 1.2 Q10.8 1.2 10.8 6 Q10.8 7.6 10 8.7 L10.6 10.9 L8.4 10.3 Q7.3 10.8 6 10.8 Q1.2 10.8 1.2 6 Q1.2 1.2 6 1.2Z" stroke="#87909e" stroke-width="1.1" stroke-linejoin="round"/></svg>
<svg style="position:absolute;left:975.50px;top:660.20px;" width="10.00" height="4.00" viewBox="0 0 10 4" fill="none"><circle cx="1.5" cy="2" r="0.9" fill="#3d434d"/><circle cx="4.8" cy="2" r="0.9" fill="#3d434d"/><circle cx="8.1" cy="2" r="0.9" fill="#3d434d"/></svg>
<div style="position:absolute;left:225px;top:675px;width:1019px;height:1px;background:#eef0f2"></div>
<svg style="position:absolute;left:247.30px;top:684.20px;" width="8.00" height="8.00" viewBox="0 0 8 8" fill="none"><path d="M4 .4V7.6M.4 4H7.6" stroke="#87909e" stroke-width="1" stroke-linecap="round"/></svg>
<div class="t" style="left:266.2px;top:678.5px;height:20px;line-height:20px;font-size:10.7px;color:#87909e;font-weight:400;">Add Task</div>
<div style="position:absolute;left:200.8px;top:698px;width:51.2px;height:23.6px;background:#6983fa;border-radius:7px;box-shadow:0 2px 6px rgba(80,100,240,.35)"></div>
<svg style="position:absolute;left:206.50px;top:703.50px;" width="13.00" height="13.00" viewBox="0 0 13 13" fill="none"><path d="M4.5 8.5 Q3.5 5 7 2.3 Q9.3 1 11.7 1.3 Q12 3.7 10.7 6 Q8 9.5 4.5 8.5Z" stroke="#fff" stroke-width="1.1" stroke-linejoin="round"/><path d="M4.3 5.2 L2 5.5 L1 7 L3.8 7.5M7.8 8.7 L7.5 11 L6 12 L5.5 9.2" stroke="#fff" stroke-width="1" stroke-linejoin="round"/><circle cx="8.5" cy="4.5" r="1" stroke="#fff" stroke-width=".9"/></svg>
<div style="position:absolute;left:224.6px;top:704.3px;width:21.1px;height:11.4px;background:#fff;border-radius:5.7px"></div>
<div class="t" style="left:224.6px;top:705.2px;height:10px;line-height:10px;font-size:8.2px;color:#6983fa;font-weight:400;width:21.1px;text-align:center;-webkit-text-stroke:.3px #6983fa">1/4</div>
<div style="position:absolute;left:1174.4px;top:617.7px;width:97.6px;height:21.8px;background:#fff;border:1px solid #e6e8eb;border-radius:11px"></div>
<svg style="position:absolute;left:1182.40px;top:623.50px;" width="11.00" height="11.00" viewBox="0 0 11 11" fill="none"><path d="M7 .5 Q7.4 3.6 10.5 4 Q7.4 4.4 7 7.5 Q6.6 4.4 3.5 4 Q6.6 3.6 7 .5Z" fill="#6a4fe0"/><path d="M2.8 6.5 Q3.1 8.4 5 8.7 Q3.1 9 2.8 10.8 Q2.5 9 .6 8.7 Q2.5 8.4 2.8 6.5Z" fill="#6a4fe0"/></svg>
<div class="t" style="left:1262.5px;top:619.3000000000001px;height:20px;line-height:20px;font-size:10.25px;color:#2a2e34;font-weight:400;transform:translateX(-100%)">Summarize list</div>
<div style="position:absolute;left:1172.8px;top:644.3px;width:99.2px;height:21.8px;background:#fff;border:1px solid #e6e8eb;border-radius:11px"></div>
<svg style="position:absolute;left:1180.80px;top:650.10px;" width="11.00" height="11.00" viewBox="0 0 11 11" fill="none"><path d="M7 .5 Q7.4 3.6 10.5 4 Q7.4 4.4 7 7.5 Q6.6 4.4 3.5 4 Q6.6 3.6 7 .5Z" fill="#6a4fe0"/><path d="M2.8 6.5 Q3.1 8.4 5 8.7 Q3.1 9 2.8 10.8 Q2.5 9 .6 8.7 Q2.5 8.4 2.8 6.5Z" fill="#6a4fe0"/></svg>
<div class="t" style="left:1262.5px;top:645.9px;height:20px;line-height:20px;font-size:10.35px;color:#2a2e34;font-weight:400;transform:translateX(-100%)">Project Update</div>
<div style="position:absolute;left:1143.3px;top:671.3px;width:128.7px;height:21.8px;background:#fff;border:1px solid #e6e8eb;border-radius:11px"></div>
<svg style="position:absolute;left:1151.30px;top:677.10px;" width="11.00" height="11.00" viewBox="0 0 11 11" fill="none"><path d="M7 .5 Q7.4 3.6 10.5 4 Q7.4 4.4 7 7.5 Q6.6 4.4 3.5 4 Q6.6 3.6 7 .5Z" fill="#6a4fe0"/><path d="M2.8 6.5 Q3.1 8.4 5 8.7 Q3.1 9 2.8 10.8 Q2.5 9 .6 8.7 Q2.5 8.4 2.8 6.5Z" fill="#6a4fe0"/></svg>
<div class="t" style="left:1262.5px;top:672.9px;height:20px;line-height:20px;font-size:10.3px;color:#2a2e34;font-weight:400;transform:translateX(-100%)">Search or ask this list</div>
<div style="position:absolute;left:1006px;top:693px;width:69.5px;height:33px;background:#fff;border-radius:16.5px;box-shadow:0 1px 6px rgba(0,0,0,.12)"></div>
<svg style="position:absolute;left:1013.20px;top:706.00px;" width="7.50" height="7.50" viewBox="0 0 7.5 7.5" fill="none"><path d="M3.75 .2 L7.3 3.75 L3.75 7.3 L.2 3.75Z" fill="#2684ff"/><path d="M3.75 2.5 L5 3.75 L3.75 5 L2.5 3.75Z" fill="#fff"/></svg>
<div class="t" style="left:1022px;top:700.5px;height:20px;line-height:20px;font-size:8.2px;color:#344563;font-weight:400;letter-spacing:-.1px;-webkit-text-stroke:.15px #344563">Jira Software</div>
<div style="position:absolute;left:1079.8px;top:693px;width:70px;height:33px;background:#fff;border-radius:16.5px;box-shadow:0 1px 6px rgba(0,0,0,.12)"></div>
<svg style="position:absolute;left:1084.20px;top:703.00px;" width="11.00" height="13.00" viewBox="0 0 11 13" fill="none"><path d="M1 1 H7 L10 4 V12 H1Z" stroke="#6a80f2" stroke-width=".8" stroke-linejoin="round"/><path d="M7 1 V4 H10Z" fill="#6a80f2"/><rect x="3" y="6.5" width="5" height="3.5" stroke="#6a80f2" stroke-width=".8"/></svg>
<div class="t" style="left:1097.4px;top:701.0px;height:20px;line-height:20px;font-size:8.3px;color:#6a80f2;font-weight:400;-webkit-text-stroke:.1px #6a80f2">Excel &amp; CSV</div>
<div style="position:absolute;left:1154.2px;top:693px;width:69.6px;height:33px;background:#fff;border-radius:16.5px;box-shadow:0 1px 6px rgba(0,0,0,.12)"></div>
<svg style="position:absolute;left:1163.00px;top:706.50px;" width="7.00" height="7.00" viewBox="0 0 7 7" fill="none"><path d="M1.2 1.2 Q3.5 3.8 5.8 5.8 M1.2 5.8 Q3.5 3.2 5.8 1.2" stroke="#1e6fe6" stroke-width="2" stroke-linecap="round"/></svg>
<div class="t" style="left:1172.2px;top:700.0px;height:20px;line-height:20px;font-size:8.45px;color:#344563;font-weight:400;-webkit-text-stroke:.15px #344563">Confluence</div>
<div style="position:absolute;left:1242.8px;top:697px;width:29.2px;height:29.2px;background:linear-gradient(45deg,#9a4de2 0%,#d043c2 45%,#fa3ca6 100%);border-radius:50%;box-shadow:2px 2px 6px rgba(250,100,150,.35)"></div>
<svg style="position:absolute;left:1250.00px;top:704.00px;" width="15.00" height="15.00" viewBox="0 0 15 15" fill="none"><path d="M9.5 .8 Q10 5.3 14 5.8 Q10 6.3 9.5 10.8 Q9 6.3 5 5.8 Q9 5.3 9.5 .8Z" fill="#fff"/><path d="M3.8 8.2 Q4.1 10.6 6.5 10.9 Q4.1 11.2 3.8 13.6 Q3.5 11.2 1.1 10.9 Q3.5 10.6 3.8 8.2Z" fill="#fff"/></svg>
</body></html>
